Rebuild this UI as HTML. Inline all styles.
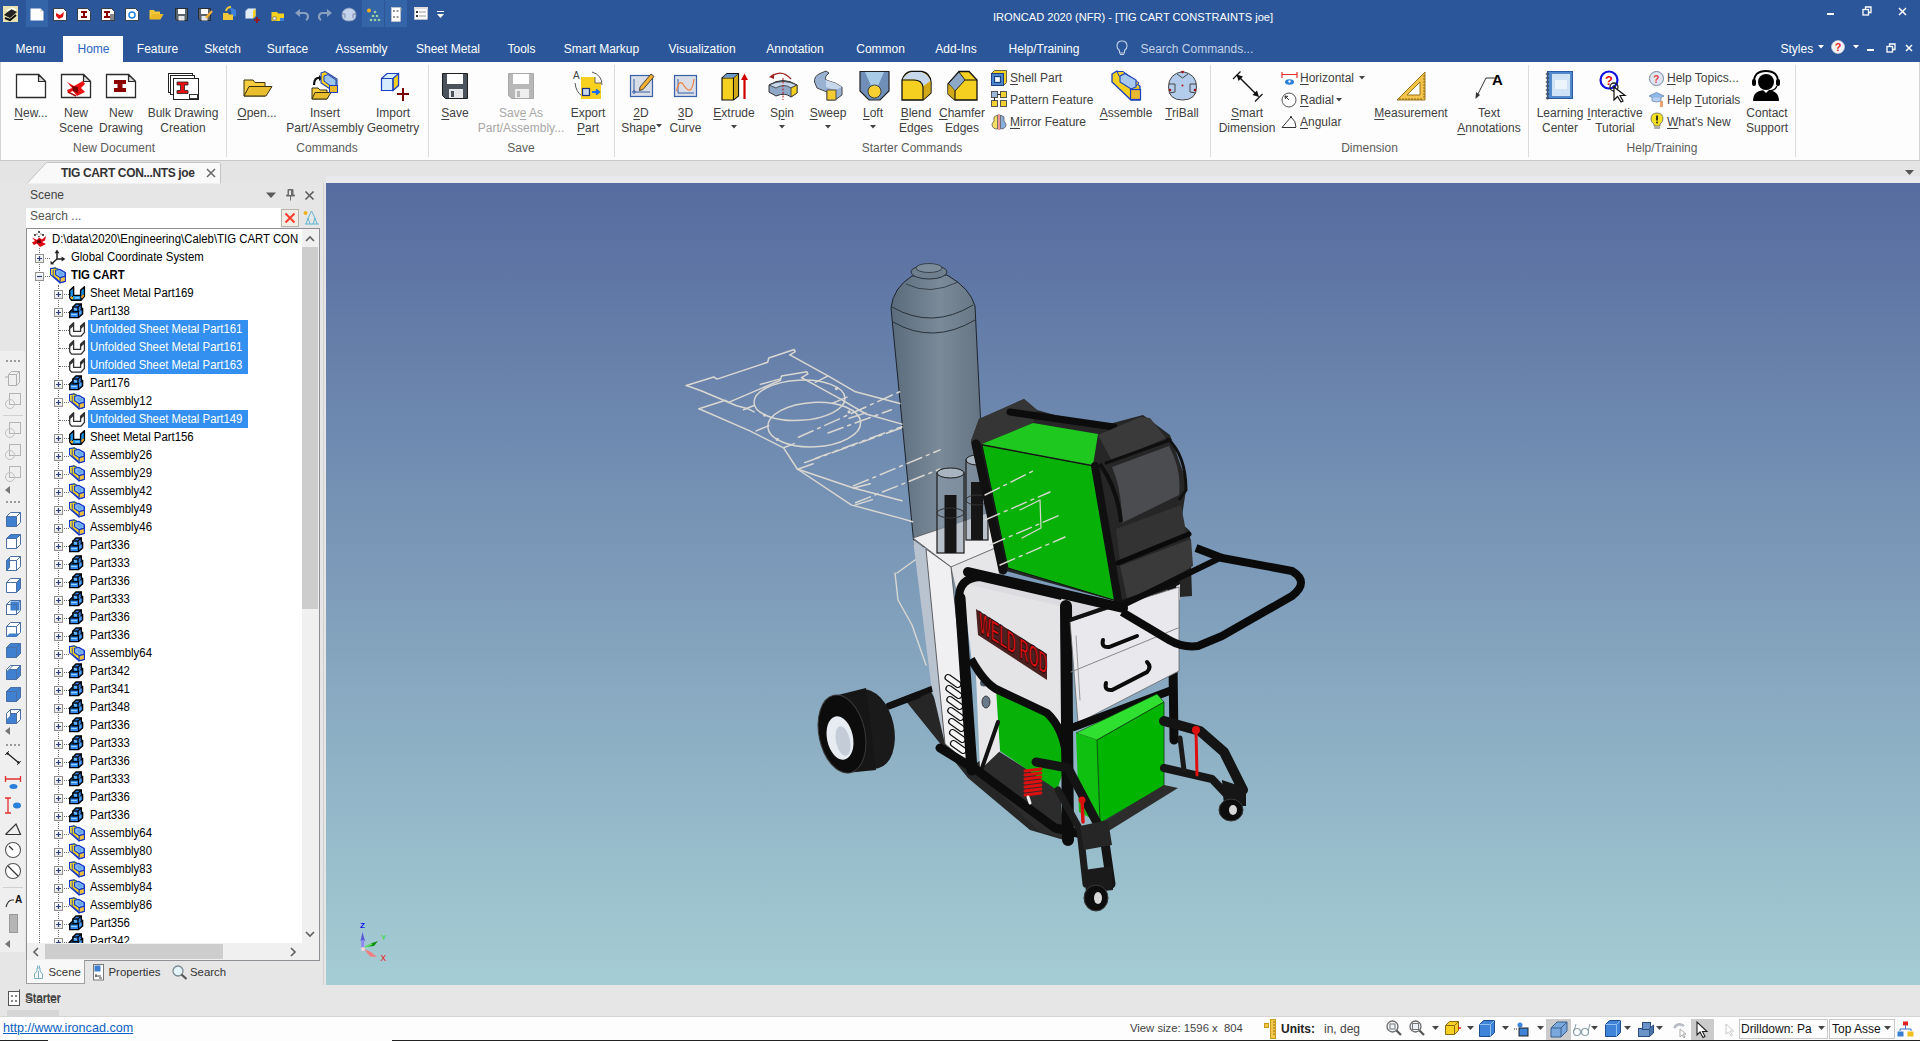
<!DOCTYPE html>
<html><head><meta charset="utf-8">
<style>
*{margin:0;padding:0;box-sizing:border-box}
html,body{width:1920px;height:1041px;overflow:hidden;background:#e6e6e6;font-family:"Liberation Sans",sans-serif;font-size:12px;color:#222}
.a{position:absolute}
.t{position:absolute;white-space:nowrap;line-height:15px}
.c{transform:translateX(-50%);text-align:center}
svg{position:absolute;overflow:visible}
</style></head><body>
<!-- title bar + tab row -->
<div class="a" style="left:0;top:0;width:1920px;height:62px;background:#2b579a"></div>
<div class="a" style="left:26px;top:0;width:22px;height:27px;background:#3565a9"></div>
<div class="a" style="left:362px;top:0;width:22px;height:27px;background:#3565a9"></div>
<div class="a" style="left:385px;top:0;width:22px;height:27px;background:#3565a9"></div>
<!-- home tab -->
<div class="a" style="left:63px;top:36px;width:60px;height:27px;background:#fdfdfd"></div>
<!-- ribbon -->
<div class="a" style="left:0;top:62px;width:1920px;height:99px;background:#fdfdfd;border-left:1px solid #d4d4d4;border-right:1px solid #d4d4d4;border-bottom:1px solid #c8c8c8"></div>
<!-- doc tab row -->
<div class="a" style="left:0;top:161px;width:1920px;height:22px;background:#e4e4e4"></div><div class="a" style="left:326px;top:176px;width:1594px;height:7px;background:#e9e9ee"></div>
<!-- viewport -->
<div class="a" style="left:326px;top:183px;width:1594px;height:802px;background:linear-gradient(#566b9f,#a5cdd4)"></div>
<!-- status bar -->
<div class="a" style="left:0;top:1016px;width:1920px;height:25px;background:#fdfdfd;border-top:1px solid #d6d6d6"></div>

<div class="t" style="left:30.5px;top:42.84px;font-size:12px;line-height:12px;color:#ffffff;transform:translateX(-50%);">Menu</div>
<div class="t" style="left:93.5px;top:42.84px;font-size:12px;line-height:12px;color:#2b64c4;transform:translateX(-50%);">Home</div>
<div class="t" style="left:157.5px;top:42.84px;font-size:12px;line-height:12px;color:#ffffff;transform:translateX(-50%);">Feature</div>
<div class="t" style="left:222.5px;top:42.84px;font-size:12px;line-height:12px;color:#ffffff;transform:translateX(-50%);">Sketch</div>
<div class="t" style="left:287.5px;top:42.84px;font-size:12px;line-height:12px;color:#ffffff;transform:translateX(-50%);">Surface</div>
<div class="t" style="left:361.5px;top:42.84px;font-size:12px;line-height:12px;color:#ffffff;transform:translateX(-50%);">Assembly</div>
<div class="t" style="left:448px;top:42.84px;font-size:12px;line-height:12px;color:#ffffff;transform:translateX(-50%);">Sheet Metal</div>
<div class="t" style="left:521.5px;top:42.84px;font-size:12px;line-height:12px;color:#ffffff;transform:translateX(-50%);">Tools</div>
<div class="t" style="left:601.5px;top:42.84px;font-size:12px;line-height:12px;color:#ffffff;transform:translateX(-50%);">Smart Markup</div>
<div class="t" style="left:702px;top:42.84px;font-size:12px;line-height:12px;color:#ffffff;transform:translateX(-50%);">Visualization</div>
<div class="t" style="left:795px;top:42.84px;font-size:12px;line-height:12px;color:#ffffff;transform:translateX(-50%);">Annotation</div>
<div class="t" style="left:880.6px;top:42.84px;font-size:12px;line-height:12px;color:#ffffff;transform:translateX(-50%);">Common</div>
<div class="t" style="left:956px;top:42.84px;font-size:12px;line-height:12px;color:#ffffff;transform:translateX(-50%);">Add-Ins</div>
<div class="t" style="left:1044px;top:42.84px;font-size:12px;line-height:12px;color:#ffffff;transform:translateX(-50%);">Help/Training</div>
<div class="t" style="left:1140.5px;top:42.84px;font-size:12px;line-height:12px;color:#c5d2e6;">Search Commands...</div>
<div class="t" style="left:1780.5px;top:42.84px;font-size:12px;line-height:12px;color:#ffffff;">Styles</div>
<div class="t" style="left:993px;top:11.60px;font-size:11.1px;line-height:11.1px;color:#ffffff;">IRONCAD 2020 (NFR) - [TIG CART CONSTRAINTS joe]</div>
<svg style="left:3px;top:6px" width="15" height="16" viewBox="0 0 15 16"><rect x="0" y="0" width="15" height="16" fill="#e8e2b0"/><path d="M1 9 L8 3 L14 6 L7 12 Z" fill="#222"/><path d="M2 12 L7 14 L13 9" stroke="#111" stroke-width="2" fill="none"/><path d="M4 5 L9 2 L13 4" stroke="#fff" stroke-width="1.5" fill="none"/></svg>
<svg style="left:30px;top:8px" width="14" height="13" viewBox="0 0 14 13"><path d="M0.5 0.5 H10.5 L13.5 3.5 V12.5 H0.5 Z" fill="#fff"/><path d="M10.5 0.5 V3.5 H13.5" fill="#ccc"/></svg>
<svg style="left:53px;top:8px" width="14" height="13" viewBox="0 0 14 13"><path d="M0.5 0.5 H10.5 L13.5 3.5 V12.5 H0.5 Z" fill="#fff" stroke="#222" stroke-width="0.8"/><path d="M3 5 L7 7 L11 4 L10 9 L6 11 L3 8 Z" fill="#e01010"/></svg>
<svg style="left:77px;top:8px" width="14" height="13" viewBox="0 0 14 13"><path d="M0.5 0.5 H10.5 L13.5 3.5 V12.5 H0.5 Z" fill="#fff" stroke="#222" stroke-width="0.8"/><path d="M4 3 H10 V5 H8 V8 H10 V10 H4 V8 H6 V5 H4 Z" fill="#8b0000"/></svg>
<svg style="left:101px;top:8px" width="14" height="13" viewBox="0 0 14 13"><path d="M0.5 0.5 H10.5 L13.5 3.5 V12.5 H0.5 Z" fill="#fff" stroke="#222" stroke-width="0.8"/><path d="M3 3 H9 V5 H7 V8 H9 V10 H3 V8 H5 V5 H3 Z" fill="#8b0000"/><path d="M9 7 H13 M9 9 H13 M9 11 H13" stroke="#111"/></svg>
<svg style="left:125px;top:8px" width="14" height="13" viewBox="0 0 14 13"><path d="M0.5 0.5 H10.5 L13.5 3.5 V12.5 H0.5 Z" fill="#fff" stroke="#222" stroke-width="0.8"/><circle cx="7" cy="7" r="3" fill="none" stroke="#2080e0" stroke-width="1.5"/></svg>
<svg style="left:149px;top:9px" width="15" height="12" viewBox="0 0 15 12"><path d="M0.5 1 H5 L6 2.5 H11 V10 H0.5 Z" fill="#f0c838"/><path d="M0.5 10.5 L3 5 H14.5 L11.5 10.5 Z" fill="#e8b828"/></svg>
<svg style="left:175px;top:8px" width="13" height="13" viewBox="0 0 13 13"><path d="M0.5 0.5 H12.5 V12.5 H2 L0.5 11 Z" fill="#5a626c" stroke="#222" stroke-width="0.8"/><rect x="3" y="1" width="7" height="5" fill="#fff"/><rect x="3.5" y="8" width="6" height="4.5" fill="#e4e6ea"/></svg>
<svg style="left:198px;top:8px" width="15" height="13" viewBox="0 0 15 13"><path d="M0.5 0.5 H12.5 V12.5 H2 L0.5 11 Z" fill="#5a626c" stroke="#222" stroke-width="0.8"/><rect x="3" y="1" width="7" height="5" fill="#fff"/><rect x="3.5" y="8" width="6" height="4.5" fill="#e4e6ea"/><path d="M8 10 L14 3" stroke="#f5b030" stroke-width="2.2"/></svg>
<svg style="left:221px;top:6px" width="16" height="16" viewBox="0 0 16 16"><path d="M9 1 L15 4 V10 L11 11 Z" fill="#3a80d8"/><path d="M2 7 H7 L8 8.5 H12 V14 H2 Z" fill="#f0c838"/><path d="M5 5 Q6 1 10 1" stroke="#f0c838" stroke-width="2" fill="none"/></svg>
<svg style="left:245px;top:8px" width="16" height="15" viewBox="0 0 16 15"><path d="M0.5 3 L3 0.5 H10.5 V8 L8 10.5 H0.5 Z" fill="#e0ecf8" stroke="#8aa8c8" stroke-width="0.7"/><path d="M8 3 L10.5 0.5 V8 L8 10.5 Z" fill="#f5d020"/><path d="M9 12 H15 M12 9 V15" stroke="#a01010" stroke-width="1.6"/></svg>
<svg style="left:271px;top:10px" width="15" height="12" viewBox="0 0 15 12"><path d="M0.5 2 H6 L7 3.5 H13 V11 H0.5 Z" fill="#f5d020"/><rect x="2" y="7" width="3" height="3" fill="#fff" stroke="#555" stroke-width="0.6"/><rect x="9" y="8" width="4" height="3" fill="#3a80d8"/></svg>
<svg style="left:295px;top:9px" width="14" height="11" viewBox="0 0 14 11"><path d="M3 4 H9 Q13 4 13 8 Q13 10 11 11" fill="none" stroke="#8aa0c0" stroke-width="2.2"/><path d="M0 4 L5 0 V8 Z" fill="#8aa0c0"/></svg>
<svg style="left:318px;top:9px" width="14" height="11" viewBox="0 0 14 11"><path d="M11 4 H5 Q1 4 1 8 Q1 10 3 11" fill="none" stroke="#8aa0c0" stroke-width="2.2"/><path d="M14 4 L9 0 V8 Z" fill="#8aa0c0"/></svg>
<svg style="left:341px;top:7px" width="16" height="15" viewBox="0 0 16 15"><path d="M8 1 Q15 2 15 8 Q15 14 8 14 Q1 14 1 8 Q1 2 8 1 Z" fill="#c4d4ec" stroke="#8a9ab8" stroke-width="0.8"/><path d="M1 7 H4 V11 M15 7 H12 V11" stroke="#7a8aa8" fill="none"/></svg>
<svg style="left:366px;top:8px" width="16" height="15" viewBox="0 0 16 15"><circle cx="3" cy="2.5" r="2" fill="#f0b020"/><circle cx="9" cy="4" r="1.3" fill="#9ad0a0"/><circle cx="7" cy="8" r="1.3" fill="#9ad0a0"/><circle cx="11" cy="8" r="1.3" fill="#9ad0a0"/><circle cx="5" cy="12" r="1.3" fill="#9ad0a0"/><circle cx="9" cy="12" r="1.3" fill="#9ad0a0"/><circle cx="13" cy="12" r="1.3" fill="#9ad0a0"/></svg>
<svg style="left:391px;top:7px" width="12" height="15" viewBox="0 0 12 15"><rect x="0.5" y="0.5" width="9" height="14" fill="#fff" stroke="#ccc" stroke-width="0.6"/><rect x="2" y="3" width="2" height="2" fill="#999"/><rect x="5.5" y="3" width="2" height="2" fill="#999"/><rect x="2" y="9" width="2" height="2" fill="#999"/><rect x="5.5" y="9" width="2" height="2" fill="#999"/><path d="M10 1 V4" stroke="#aaa"/></svg>
<svg style="left:414px;top:7px" width="14" height="13" viewBox="0 0 14 13"><rect x="0.5" y="0.5" width="13" height="12" fill="#fff" stroke="#ccc" stroke-width="0.6"/><rect x="0" y="0" width="14" height="2" fill="#ddd"/><rect x="2" y="4" width="2" height="2" fill="#333"/><rect x="2" y="8" width="2" height="2" fill="#333"/><path d="M5 5 H12 M5 9 H12" stroke="#999"/></svg>
<svg style="left:437px;top:11px" width="7" height="8" viewBox="0 0 7 8"><path d="M0 0.5 H7" stroke="#fff"/><path d="M0 3 H7 L3.5 7 Z" fill="#fff"/></svg>
<div class="a" style="left:1827px;top:13px;width:7px;height:2px;background:#ffffff;"></div>
<svg style="left:1862px;top:6px" width="10" height="10" viewBox="0 0 10 10"><rect x="1" y="3.5" width="5.5" height="5.5" fill="none" stroke="#fff" stroke-width="1.3"/><path d="M3.5 3.5 V1 H9 V6.5 H6.5" fill="none" stroke="#fff" stroke-width="1.3"/></svg>
<svg style="left:1898px;top:7px" width="9" height="9" viewBox="0 0 9 9"><path d="M1 1 L8 8 M8 1 L1 8" stroke="#fff" stroke-width="1.5"/></svg>
<svg style="left:1818px;top:45px" width="6" height="4" viewBox="0 0 6 4"><path d="M0 0 H6 L3 3.5 Z" fill="#fff"/></svg>
<svg style="left:1831px;top:40px" width="14" height="14" viewBox="0 0 14 14"><circle cx="7" cy="7" r="6.5" fill="#f2f2f4" stroke="#d8d8e0" stroke-width="0.6"/><text x="3.8" y="11.3" font-size="11" font-weight="bold" font-family="Liberation Sans" fill="#e82828">?</text></svg>
<svg style="left:1853px;top:45px" width="6" height="4" viewBox="0 0 6 4"><path d="M0 0 H6 L3 3.5 Z" fill="#fff"/></svg>
<div class="a" style="left:1867px;top:49px;width:7px;height:2px;background:#ffffff;"></div>
<svg style="left:1886px;top:43px" width="10" height="10" viewBox="0 0 10 10"><rect x="1" y="3.5" width="5.5" height="5.5" fill="none" stroke="#fff" stroke-width="1.3"/><path d="M3.5 3.5 V1 H9 V6.5 H6.5" fill="none" stroke="#fff" stroke-width="1.3"/></svg>
<svg style="left:1905px;top:44px" width="8" height="8" viewBox="0 0 8 8"><path d="M1 1 L7 7 M7 1 L1 7" stroke="#fff" stroke-width="1.5"/></svg>
<svg style="left:1116px;top:40px" width="12" height="16" viewBox="0 0 12 16"><path d="M6 1 Q11 1 11 6 Q11 9 8.5 10.5 V13 H3.5 V10.5 Q1 9 1 6 Q1 1 6 1 Z" fill="none" stroke="#c5d2e6" stroke-width="1.1"/><path d="M4 14.5 H8" stroke="#c5d2e6"/></svg>
<div class="t" style="left:31px;top:106.84px;font-size:12px;line-height:12px;color:#404040;transform:translateX(-50%);"><u style="text-decoration-thickness:1px;text-underline-offset:2px">N</u>ew...</div>
<div class="t" style="left:76px;top:106.84px;font-size:12px;line-height:12px;color:#404040;transform:translateX(-50%);">New</div>
<div class="t" style="left:76px;top:121.84px;font-size:12px;line-height:12px;color:#404040;transform:translateX(-50%);">Scene</div>
<div class="t" style="left:121px;top:106.84px;font-size:12px;line-height:12px;color:#404040;transform:translateX(-50%);">New</div>
<div class="t" style="left:121px;top:121.84px;font-size:12px;line-height:12px;color:#404040;transform:translateX(-50%);">Drawing</div>
<div class="t" style="left:183px;top:106.84px;font-size:12px;line-height:12px;color:#404040;transform:translateX(-50%);">Bulk Drawing</div>
<div class="t" style="left:183px;top:121.84px;font-size:12px;line-height:12px;color:#404040;transform:translateX(-50%);">Creation</div>
<div class="t" style="left:257px;top:106.84px;font-size:12px;line-height:12px;color:#404040;transform:translateX(-50%);"><u style="text-decoration-thickness:1px;text-underline-offset:2px">O</u>pen...</div>
<div class="t" style="left:325px;top:106.84px;font-size:12px;line-height:12px;color:#404040;transform:translateX(-50%);">Insert</div>
<div class="t" style="left:325px;top:121.84px;font-size:12px;line-height:12px;color:#404040;transform:translateX(-50%);">Part/Assembly</div>
<div class="t" style="left:393px;top:106.84px;font-size:12px;line-height:12px;color:#404040;transform:translateX(-50%);">Import</div>
<div class="t" style="left:393px;top:121.84px;font-size:12px;line-height:12px;color:#404040;transform:translateX(-50%);">Geometry</div>
<div class="t" style="left:455px;top:106.84px;font-size:12px;line-height:12px;color:#404040;transform:translateX(-50%);"><u style="text-decoration-thickness:1px;text-underline-offset:2px">S</u>ave</div>
<div class="t" style="left:521px;top:106.84px;font-size:12px;line-height:12px;color:#a8a8a8;transform:translateX(-50%);">Sav<u style="text-decoration-thickness:1px;text-underline-offset:2px">e</u> As</div>
<div class="t" style="left:521px;top:121.84px;font-size:12px;line-height:12px;color:#a8a8a8;transform:translateX(-50%);">Part/Assembly...</div>
<div class="t" style="left:588px;top:106.84px;font-size:12px;line-height:12px;color:#404040;transform:translateX(-50%);">Export</div>
<div class="t" style="left:588px;top:121.84px;font-size:12px;line-height:12px;color:#404040;transform:translateX(-50%);"><u style="text-decoration-thickness:1px;text-underline-offset:2px">P</u>art</div>
<div class="t" style="left:641px;top:106.84px;font-size:12px;line-height:12px;color:#404040;transform:translateX(-50%);"><u style="text-decoration-thickness:1px;text-underline-offset:2px">2</u>D</div>
<div class="t" style="left:638.5px;top:121.84px;font-size:12px;line-height:12px;color:#404040;transform:translateX(-50%);">Shape</div>
<div class="t" style="left:685.5px;top:106.84px;font-size:12px;line-height:12px;color:#404040;transform:translateX(-50%);"><u style="text-decoration-thickness:1px;text-underline-offset:2px">3</u>D</div>
<div class="t" style="left:685.5px;top:121.84px;font-size:12px;line-height:12px;color:#404040;transform:translateX(-50%);">Curve</div>
<div class="t" style="left:734px;top:106.84px;font-size:12px;line-height:12px;color:#404040;transform:translateX(-50%);"><u style="text-decoration-thickness:1px;text-underline-offset:2px">E</u>xtrude</div>
<div class="t" style="left:782px;top:106.84px;font-size:12px;line-height:12px;color:#404040;transform:translateX(-50%);">S<u style="text-decoration-thickness:1px;text-underline-offset:2px">p</u>in</div>
<div class="t" style="left:828px;top:106.84px;font-size:12px;line-height:12px;color:#404040;transform:translateX(-50%);"><u style="text-decoration-thickness:1px;text-underline-offset:2px">S</u>weep</div>
<div class="t" style="left:873px;top:106.84px;font-size:12px;line-height:12px;color:#404040;transform:translateX(-50%);"><u style="text-decoration-thickness:1px;text-underline-offset:2px">L</u>oft</div>
<div class="t" style="left:916px;top:106.84px;font-size:12px;line-height:12px;color:#404040;transform:translateX(-50%);"><u style="text-decoration-thickness:1px;text-underline-offset:2px">B</u>lend</div>
<div class="t" style="left:916px;top:121.84px;font-size:12px;line-height:12px;color:#404040;transform:translateX(-50%);">Edges</div>
<div class="t" style="left:962px;top:106.84px;font-size:12px;line-height:12px;color:#404040;transform:translateX(-50%);"><u style="text-decoration-thickness:1px;text-underline-offset:2px">C</u>hamfer</div>
<div class="t" style="left:962px;top:121.84px;font-size:12px;line-height:12px;color:#404040;transform:translateX(-50%);">Edges</div>
<div class="t" style="left:1126px;top:106.84px;font-size:12px;line-height:12px;color:#404040;transform:translateX(-50%);"><u style="text-decoration-thickness:1px;text-underline-offset:2px">A</u>ssemble</div>
<div class="t" style="left:1182px;top:106.84px;font-size:12px;line-height:12px;color:#404040;transform:translateX(-50%);"><u style="text-decoration-thickness:1px;text-underline-offset:2px">T</u>riBall</div>
<div class="t" style="left:1247px;top:106.84px;font-size:12px;line-height:12px;color:#404040;transform:translateX(-50%);"><u style="text-decoration-thickness:1px;text-underline-offset:2px">S</u>mart</div>
<div class="t" style="left:1247px;top:121.84px;font-size:12px;line-height:12px;color:#404040;transform:translateX(-50%);">Dimension</div>
<div class="t" style="left:1411px;top:106.84px;font-size:12px;line-height:12px;color:#404040;transform:translateX(-50%);"><u style="text-decoration-thickness:1px;text-underline-offset:2px">M</u>easurement</div>
<div class="t" style="left:1489px;top:106.84px;font-size:12px;line-height:12px;color:#404040;transform:translateX(-50%);">Text</div>
<div class="t" style="left:1489px;top:121.84px;font-size:12px;line-height:12px;color:#404040;transform:translateX(-50%);"><u style="text-decoration-thickness:1px;text-underline-offset:2px">A</u>nnotations</div>
<div class="t" style="left:1560px;top:106.84px;font-size:12px;line-height:12px;color:#404040;transform:translateX(-50%);">Learning</div>
<div class="t" style="left:1560px;top:121.84px;font-size:12px;line-height:12px;color:#404040;transform:translateX(-50%);">Center</div>
<div class="t" style="left:1615px;top:106.84px;font-size:12px;line-height:12px;color:#404040;transform:translateX(-50%);"><u style="text-decoration-thickness:1px;text-underline-offset:2px">I</u>nteractive</div>
<div class="t" style="left:1615px;top:121.84px;font-size:12px;line-height:12px;color:#404040;transform:translateX(-50%);">Tutorial</div>
<div class="t" style="left:1767px;top:106.84px;font-size:12px;line-height:12px;color:#404040;transform:translateX(-50%);">Contact</div>
<div class="t" style="left:1767px;top:121.84px;font-size:12px;line-height:12px;color:#404040;transform:translateX(-50%);">Support</div>
<svg style="left:656px;top:123.5px" width="6" height="3.5" viewBox="0 0 6 3.5"><path d="M0 0 H6 L3 3.5 Z" fill="#444"/></svg>
<svg style="left:731px;top:124.5px" width="6" height="3.5" viewBox="0 0 6 3.5"><path d="M0 0 H6 L3 3.5 Z" fill="#444"/></svg>
<svg style="left:779px;top:124.5px" width="6" height="3.5" viewBox="0 0 6 3.5"><path d="M0 0 H6 L3 3.5 Z" fill="#444"/></svg>
<svg style="left:825px;top:124.5px" width="6" height="3.5" viewBox="0 0 6 3.5"><path d="M0 0 H6 L3 3.5 Z" fill="#444"/></svg>
<svg style="left:870px;top:124.5px" width="6" height="3.5" viewBox="0 0 6 3.5"><path d="M0 0 H6 L3 3.5 Z" fill="#444"/></svg>
<svg style="left:1359px;top:75.5px" width="6" height="3.5" viewBox="0 0 6 3.5"><path d="M0 0 H6 L3 3.5 Z" fill="#444"/></svg>
<svg style="left:1336px;top:97.5px" width="6" height="3.5" viewBox="0 0 6 3.5"><path d="M0 0 H6 L3 3.5 Z" fill="#444"/></svg>
<div class="t" style="left:114px;top:141.84px;font-size:12px;line-height:12px;color:#5c5c5c;transform:translateX(-50%);">New Document</div>
<div class="t" style="left:327px;top:141.84px;font-size:12px;line-height:12px;color:#5c5c5c;transform:translateX(-50%);">Commands</div>
<div class="t" style="left:521px;top:141.84px;font-size:12px;line-height:12px;color:#5c5c5c;transform:translateX(-50%);">Save</div>
<div class="t" style="left:912px;top:141.84px;font-size:12px;line-height:12px;color:#5c5c5c;transform:translateX(-50%);">Starter Commands</div>
<div class="t" style="left:1369.5px;top:141.84px;font-size:12px;line-height:12px;color:#5c5c5c;transform:translateX(-50%);">Dimension</div>
<div class="t" style="left:1662px;top:141.84px;font-size:12px;line-height:12px;color:#5c5c5c;transform:translateX(-50%);">Help/Training</div>
<div class="t" style="left:1010px;top:71.84px;font-size:12px;line-height:12px;color:#404040;"><u style="text-decoration-thickness:1px;text-underline-offset:2px">S</u>hell Part</div>
<div class="t" style="left:1010px;top:93.84px;font-size:12px;line-height:12px;color:#404040;">Pattern Feature</div>
<div class="t" style="left:1010px;top:115.84px;font-size:12px;line-height:12px;color:#404040;"><u style="text-decoration-thickness:1px;text-underline-offset:2px">M</u>irror Feature</div>
<div class="t" style="left:1300px;top:71.84px;font-size:12px;line-height:12px;color:#404040;"><u style="text-decoration-thickness:1px;text-underline-offset:2px">H</u>orizontal</div>
<div class="t" style="left:1300px;top:93.84px;font-size:12px;line-height:12px;color:#404040;"><u style="text-decoration-thickness:1px;text-underline-offset:2px">R</u>adial</div>
<div class="t" style="left:1300px;top:115.84px;font-size:12px;line-height:12px;color:#404040;"><u style="text-decoration-thickness:1px;text-underline-offset:2px">A</u>ngular</div>
<div class="t" style="left:1667px;top:71.84px;font-size:12px;line-height:12px;color:#404040;"><u style="text-decoration-thickness:1px;text-underline-offset:2px">H</u>elp Topics...</div>
<div class="t" style="left:1667px;top:93.84px;font-size:12px;line-height:12px;color:#404040;">Help <u style="text-decoration-thickness:1px;text-underline-offset:2px">T</u>utorials</div>
<div class="t" style="left:1667px;top:115.84px;font-size:12px;line-height:12px;color:#404040;"><u style="text-decoration-thickness:1px;text-underline-offset:2px">W</u>hat's New</div>
<div class="a" style="left:226px;top:65px;width:1px;height:92px;background:#dcdcdc;"></div>
<div class="a" style="left:428px;top:65px;width:1px;height:92px;background:#dcdcdc;"></div>
<div class="a" style="left:614px;top:65px;width:1px;height:92px;background:#dcdcdc;"></div>
<div class="a" style="left:1210px;top:65px;width:1px;height:92px;background:#dcdcdc;"></div>
<div class="a" style="left:1528px;top:65px;width:1px;height:92px;background:#dcdcdc;"></div>
<div class="a" style="left:1795px;top:65px;width:1px;height:92px;background:#dcdcdc;"></div>
<svg style="left:16px;top:74px" width="31" height="25" viewBox="0 0 31 25"><path d="M0.5 0.5 H22.5 L29.5 7.5 V23.5 H0.5 Z" fill="#fff" stroke="#2b2b2b" stroke-width="1.3"/><path d="M22.5 0.5 V7.5 H29.5 Z" fill="#d8d8d8" stroke="#2b2b2b" stroke-width="1.2" stroke-linejoin="round"/></svg>
<svg style="left:61px;top:74px" width="31" height="25" viewBox="0 0 31 25"><path d="M0.5 0.5 H22.5 L29.5 7.5 V23.5 H0.5 Z" fill="#fff" stroke="#2b2b2b" stroke-width="1.3"/><path d="M22.5 0.5 V7.5 H29.5 Z" fill="#d8d8d8" stroke="#2b2b2b" stroke-width="1.2" stroke-linejoin="round"/><path d="M6 8 L13 12 L22 7 L24 10 L20 14 L24 18 L16 22 L12 17 L7 19 L6 16 L11 14 Z" fill="#ee1010"/><path d="M11 12 L17 13 L17 19 L12 17 Z" fill="#7a0000"/><path d="M7 18 L15 22" stroke="#aa1010" stroke-width="1.5"/></svg>
<svg style="left:106px;top:74px" width="31" height="25" viewBox="0 0 31 25"><path d="M0.5 0.5 H22.5 L29.5 7.5 V23.5 H0.5 Z" fill="#fff" stroke="#2b2b2b" stroke-width="1.3"/><path d="M22.5 0.5 V7.5 H29.5 Z" fill="#d8d8d8" stroke="#2b2b2b" stroke-width="1.2" stroke-linejoin="round"/><path d="M8 6 H20 V10 H16.5 V14 H20 V18 H8 V14 H11.5 V10 H8 Z" fill="#8b0000"/></svg>
<svg style="left:168px;top:73px" width="32" height="27" viewBox="0 0 32 27"><rect x="0.5" y="0.5" width="24" height="19" fill="#fff" stroke="#222"/><rect x="2.5" y="2.5" width="24" height="19" fill="#fff" stroke="#222"/><rect x="5.5" y="5.5" width="25" height="21" fill="#fff" stroke="#222"/><path d="M9 9 H20 V12 H16.5 V17.5 H20 V20.5 H9 V17.5 H12.5 V12 H9 Z" fill="#e81010" stroke="#222" stroke-width="0.8"/><rect x="21.5" y="21.5" width="8" height="4" fill="#fff" stroke="#333"/></svg>
<svg style="left:243px;top:77px" width="30" height="21" viewBox="0 0 30 21"><path d="M1 3 H10 L12 5.5 H22 V19 H1 Z" fill="#f5cd3e" stroke="#3a3010" stroke-width="1"/><path d="M1 19 L6 9.5 H29 L23 19 Z" fill="#e8bd2e" stroke="#3a3010" stroke-width="1"/></svg>
<svg style="left:310px;top:71px" width="31" height="31" viewBox="0 0 31 31"><path d="M4 14 Q4 6 10 7" fill="none" stroke="#111" stroke-width="2.2"/><path d="M9 4 L13 7.5 L9 10 Z" fill="#111"/><path d="M2 17 H8 L10 19 H17 V28 H2 Z" fill="#f5cd3e" stroke="#3a3010"/><path d="M2 28 L5 21.5 H21 L17 28 Z" fill="#e8bd2e" stroke="#3a3010"/><path d="M11 2 L15 0.5 L27 8 V19 L23 20 L11 12 Z" fill="#f5d020" stroke="#1a3fc0" stroke-width="1.1"/><path d="M14 5 L18 3.5 L26 9 V15 L22 16 L14 10 Z" fill="#9cc4f0" stroke="#1a3fc0"/><rect x="19.5" y="14.5" width="8" height="7" fill="#e8b830" stroke="#1a3fc0"/></svg>
<svg style="left:380px;top:72px" width="30" height="30" viewBox="0 0 30 30"><path d="M1.5 6.5 L7 1.5 H18.5 V13.5 L13 18.5 H1.5 Z" fill="#d4ecfc" stroke="#1a3fc0" stroke-width="1.2"/><path d="M13 6.5 L18.5 1.5 V13.5 L13 18.5 Z" fill="#f5d020" stroke="#1a3fc0" stroke-width="1.2"/><path d="M1.5 6.5 H13 V18.5" fill="none" stroke="#1a3fc0" stroke-width="1.2"/><path d="M17 22 H29 M23 16 V29" stroke="#7a0000" stroke-width="2"/></svg>
<svg style="left:442px;top:73px" width="27" height="27" viewBox="0 0 27 27"><path d="M0.5 0.5 H25.5 V25.5 H3.5 L0.5 22.5 Z" fill="#4a525c" stroke="#1e1e1e" stroke-width="1"/><rect x="5" y="1" width="16" height="10" fill="#fff"/><rect x="7" y="16" width="14" height="9" fill="#e4e6ea"/><rect x="9" y="18" width="3" height="6" fill="#4a525c"/></svg>
<svg style="left:508px;top:73px" width="27" height="27" viewBox="0 0 27 27"><path d="M0.5 0.5 H25.5 V25.5 H3.5 L0.5 22.5 Z" fill="#b8b8b8" stroke="#a8a8a8" stroke-width="1"/><rect x="5" y="1" width="16" height="10" fill="#fff"/><rect x="7" y="16" width="14" height="9" fill="#eeeeee"/><rect x="9" y="18" width="3" height="6" fill="#b8b8b8"/></svg>
<svg style="left:573px;top:70px" width="32" height="31" viewBox="0 0 32 31"><text x="0" y="9" font-size="10" font-family="Liberation Sans" fill="#444">A</text><path d="M19 2 Q29 5 29 15" fill="none" stroke="#555" stroke-width="1"/><path d="M2 13 Q3 22 9 26" fill="none" stroke="#555"/><path d="M8 7 H22 L28 13 V29 H8 Z" fill="#f7d020"/><path d="M22 7 V13 H28" fill="#fff" stroke="#444" stroke-width="0.8"/><rect x="9.5" y="18.5" width="7" height="7" fill="#c8d8ec" stroke="#1a3080" stroke-width="1.2"/><path d="M19 22 H25 M23 19.5 L26 22 L23 24.5" stroke="#1a6ae8" stroke-width="2" fill="none"/></svg>
<svg style="left:630px;top:70px" width="25" height="28" viewBox="0 0 25 28"><rect x="0.5" y="5.5" width="22" height="21" fill="#d8dde6" stroke="#3a60a8" stroke-width="1.2"/><path d="M4 9 V22 H20" stroke="#3a60a8" stroke-width="1" fill="none"/><circle cx="4" cy="22" r="1.3" fill="none" stroke="#3a60a8"/><path d="M10 17 L21 4 L24 6.5 L13 19.5 L9.5 20.5 Z" fill="#f5b030" stroke="#333" stroke-width="0.9"/></svg>
<svg style="left:674px;top:75px" width="24" height="23" viewBox="0 0 24 23"><rect x="0.5" y="0.5" width="22" height="21" fill="#d8dde6" stroke="#3a60a8" stroke-width="1.2"/><path d="M4 4 V18 H20" stroke="#3a60a8" stroke-width="1" fill="none"/><path d="M2.5 16 Q5 4 9 9 Q13 16 16 15 Q19 13 20 4" fill="none" stroke="#f08040" stroke-width="1.2"/></svg>
<svg style="left:721px;top:72px" width="28" height="29" viewBox="0 0 28 29"><path d="M1 6 L6 1.5 H17.5 V24 L12.5 28 H1 Z" fill="#f5d020" stroke="#111" stroke-width="1.2"/><path d="M1 6 H12.5 V28 M12.5 6 L17.5 1.5" fill="none" stroke="#111" stroke-width="1.1"/><path d="M1.5 5.5 L6 2 H17 L12.5 5.5 Z" fill="#6a9ad0"/><path d="M13 6 L17 2.5 V23.5 L13 27 Z" fill="#d0a818"/><path d="M23.5 27 V6" stroke="#d00000" stroke-width="2.2"/><path d="M20 8 L23.5 1.5 L27 8 Z" fill="#d00000"/></svg>
<svg style="left:768px;top:71px" width="31" height="30" viewBox="0 0 31 30"><path d="M23 8 Q14 -2 4 5" fill="none" stroke="#a02020" stroke-width="1.2"/><path d="M1 6 L6 2.5 L6 8 Z" fill="#a02020"/><path d="M1 14 Q15 5 29 14 V22 L23 26 Q17 21 8 25 L1 21 Z" fill="#8fa8c8" stroke="#333" stroke-width="1"/><path d="M1 14 Q15 7 29 14 L23 17 Q16 12 8 17 Z" fill="#c8d8ec" stroke="#333" stroke-width="0.8"/><path d="M23 17 L29 14 V22 L23 26 Z" fill="#f5d020" stroke="#333" stroke-width="0.8"/><path d="M15 7 V29" stroke="#c01010" stroke-width="1" stroke-dasharray="2 1.5"/></svg>
<svg style="left:813px;top:70px" width="31" height="32" viewBox="0 0 31 32"><path d="M1.5 12 Q1 6 7 3.5 L13 1 L16 3 Q11 7 13 10 L22 13 L29 17 V25 L22 30 H14 V22 L4 18 Z" fill="#9ab2d2" stroke="#444" stroke-width="1"/><path d="M13 10 L22 13 L29 17 L22 20 L13 17 Z" fill="#c8d8ec"/><rect x="14" y="20" width="9" height="10" fill="#f5cd30" stroke="#444" stroke-width="0.9"/></svg>
<svg style="left:859px;top:70px" width="31" height="32" viewBox="0 0 31 32"><path d="M1 1.5 H30 V21 L21 30 H10 L1 21 Z" fill="#6f8fb8" stroke="#222" stroke-width="1.2"/><path d="M6 2 H25 L18 18 H13 Z" fill="#a8cce8"/><circle cx="15.5" cy="21.5" r="6.5" fill="#f5d030" stroke="#333" stroke-width="0.9"/></svg>
<svg style="left:901px;top:70px" width="31" height="32" viewBox="0 0 31 32"><path d="M1 10 Q4 2 10 1.5 H21 Q29 3 30 12 V23 L22 30 H1 Z" fill="#f5d020" stroke="#111" stroke-width="1.3"/><path d="M1.5 9.5 Q5 3 11 2 H20 Q27 4 29.5 11 L22 16.5 Q19 9 12 9.5 Z" fill="#c8d8ec"/><path d="M22 16.5 L29.5 11 V23 L22 30 Z" fill="#d0a818"/><path d="M1 10 H13 Q21 10 22 17 V30" fill="none" stroke="#111" stroke-width="1.1"/></svg>
<svg style="left:947px;top:70px" width="31" height="32" viewBox="0 0 31 32"><path d="M1 14 L12 1.5 H22 L30 10 V30 H8 L1 24 Z" fill="#f5d020" stroke="#111" stroke-width="1.3"/><path d="M1.5 13.5 L12 2 L18 10 L8 21 Z" fill="#8ea8c8" stroke="#111" stroke-width="0.9"/><path d="M1.5 14 L8 21 V30 L1 24 Z" fill="#d0a818"/><path d="M18 10 H30 M8 21 V30" stroke="#111" stroke-width="1.1"/></svg>
<svg style="left:991px;top:70px" width="16" height="16" viewBox="0 0 16 16"><path d="M0.5 3.5 L3.5 0.5 H15.5 V12.5 L12.5 15.5 H0.5 Z" fill="#f5d020" stroke="#444" stroke-width="0.8"/><rect x="0.5" y="3.5" width="12" height="12" fill="#4a86c8" stroke="#1e3e80"/><rect x="3.5" y="6.5" width="6" height="6" fill="#c8e0f4" stroke="#1e3e80"/><rect x="5" y="8" width="3" height="3" fill="#fff"/></svg>
<svg style="left:991px;top:91px" width="16" height="17" viewBox="0 0 16 17"><rect x="0.5" y="0.5" width="6" height="6" fill="#9ab8d8" stroke="#555"/><rect x="9.5" y="0.5" width="6" height="6" fill="#f5d030" stroke="#555"/><rect x="0.5" y="9.5" width="6" height="6" fill="#f5d030" stroke="#555"/><rect x="9.5" y="9.5" width="6" height="6" fill="#f5d030" stroke="#555"/><path d="M6.5 3.5 H9.5 M3.5 6.5 V9.5" stroke="#222"/></svg>
<svg style="left:991px;top:114px" width="16" height="16" viewBox="0 0 16 16"><path d="M6.5 1 V15 Q1 15 1 10 L3 7 L3 3 Z" fill="#f5e060" stroke="#555" stroke-width="0.8"/><path d="M9.5 1 V15 Q15 15 15 10 L13 7 L13 3 Z" fill="#8ab0e0" stroke="#555" stroke-width="0.8"/><path d="M8 0 V16" stroke="#e03030" stroke-width="1"/></svg>
<svg style="left:1111px;top:70px" width="31" height="32" viewBox="0 0 31 32"><path d="M1 4 L6 1 L12 5 L29 16 V30 H20 L1 12 Z" fill="#f5d020" stroke="#1a3fc0" stroke-width="1.3"/><path d="M6 1.5 L12 1.5 L28 13 L24 17 L8 6 Z" fill="#f5d020" stroke="#1a3fc0"/><path d="M9 6 L14 3.5 L25 10 V17 L20 19 L9 12 Z" fill="#a8c8ec" stroke="#1a3fc0" stroke-width="1.1"/><rect x="19.5" y="19.5" width="10" height="10" fill="#e8b830" stroke="#1a3fc0" stroke-width="1.2"/></svg>
<svg style="left:1167px;top:70px" width="31" height="32" viewBox="0 0 31 32"><path d="M15.5 1.5 Q29.5 4 29.5 17 Q29.5 30 15.5 30 Q1.5 30 1.5 17 Q1.5 4 15.5 1.5 Z" fill="#b4ccec" stroke="#444" stroke-width="1"/><path d="M10 4 L15.5 8 L21 4" fill="none" stroke="#444"/><path d="M1.5 14 L8 14 V22 L2 23 M29.5 14 L23 14 V22 L29 23" fill="none" stroke="#444"/><circle cx="15.5" cy="2" r="1.3" fill="#a01010"/><circle cx="15.5" cy="15.5" r="1" fill="#c01010"/><circle cx="3" cy="20" r="1.3" fill="#a01010"/><circle cx="28" cy="20" r="1.3" fill="#a01010"/></svg>
<svg style="left:1231px;top:70px" width="33" height="33" viewBox="0 0 33 33"><path d="M2 9 L9.5 1.5 M24 31.5 L31.5 24" stroke="#111" stroke-width="1.2"/><path d="M7 6 L26.5 25.5" stroke="#111" stroke-width="1.5"/><path d="M5.5 4.5 L12 6.5 L7.5 11 Z M28 27 L21.5 25 L26 20.5 Z" fill="#111"/></svg>
<svg style="left:1281px;top:71px" width="18" height="16" viewBox="0 0 18 16"><path d="M1 1 V7 M16 1 V7 M1 3.5 H16" stroke="#e03030" stroke-width="1.2"/><ellipse cx="8.5" cy="11" rx="4.5" ry="2.8" fill="#2a80d8"/><circle cx="8.5" cy="10.5" r="1.2" fill="#fff"/></svg>
<svg style="left:1281px;top:92px" width="16" height="16" viewBox="0 0 16 16"><circle cx="8" cy="8" r="7" fill="#fff" stroke="#555" stroke-width="1"/><path d="M4 4 L8 8 M4 4 L7 4.5 M4 4 L4.5 7" stroke="#333" stroke-width="1"/></svg>
<svg style="left:1281px;top:113px" width="16" height="16" viewBox="0 0 16 16"><path d="M1 14.5 H15 M1 14.5 L10 4 Q15 8 15 14" fill="none" stroke="#333" stroke-width="1"/><circle cx="10" cy="4" r="0.9" fill="#111"/></svg>
<svg style="left:1396px;top:70px" width="31" height="32" viewBox="0 0 31 32"><path d="M1 30 L29 2 V30 Z" fill="#f3c34a" stroke="#9a7418" stroke-width="1"/><path d="M11 25 L24 12 V25 Z" fill="#fff" stroke="#9a7418" stroke-width="1"/><path d="M4 30 V28" stroke="#7a5a10" stroke-width="0.8"/><path d="M7 30 V28" stroke="#7a5a10" stroke-width="0.8"/><path d="M10 30 V28" stroke="#7a5a10" stroke-width="0.8"/><path d="M13 30 V28" stroke="#7a5a10" stroke-width="0.8"/><path d="M16 30 V28" stroke="#7a5a10" stroke-width="0.8"/><path d="M19 30 V28" stroke="#7a5a10" stroke-width="0.8"/><path d="M22 30 V28" stroke="#7a5a10" stroke-width="0.8"/><path d="M25 30 V28" stroke="#7a5a10" stroke-width="0.8"/><path d="M29 6 H27" stroke="#7a5a10" stroke-width="0.8"/><path d="M29 9 H27" stroke="#7a5a10" stroke-width="0.8"/><path d="M29 12 H27" stroke="#7a5a10" stroke-width="0.8"/><path d="M29 15 H27" stroke="#7a5a10" stroke-width="0.8"/><path d="M29 18 H27" stroke="#7a5a10" stroke-width="0.8"/><path d="M29 21 H27" stroke="#7a5a10" stroke-width="0.8"/><path d="M29 24 H27" stroke="#7a5a10" stroke-width="0.8"/><path d="M29 27 H27" stroke="#7a5a10" stroke-width="0.8"/></svg>
<svg style="left:1475px;top:71px" width="30" height="30" viewBox="0 0 30 30"><path d="M22 7 H11 L2 25" fill="none" stroke="#333" stroke-width="1"/><path d="M0.5 28 L1 21 L5 24 Z" fill="#333"/><text x="17" y="14" font-size="15" font-weight="bold" font-family="Liberation Sans" fill="#000">A</text></svg>
<svg style="left:1545px;top:71px" width="28" height="29" viewBox="0 0 28 29"><rect x="2.5" y="0.5" width="25" height="27" fill="#4a88d0" stroke="#2a5aa0"/><rect x="6.5" y="2.5" width="19" height="23" fill="#cfe2f6" stroke="#5a8ac8"/><rect x="10" y="9" width="12" height="9" fill="#eef4fb"/><circle cx="2.5" cy="3" r="1.3" fill="none" stroke="#444" stroke-width="0.8"/><circle cx="2.5" cy="7" r="1.3" fill="none" stroke="#444" stroke-width="0.8"/><circle cx="2.5" cy="11" r="1.3" fill="none" stroke="#444" stroke-width="0.8"/><circle cx="2.5" cy="15" r="1.3" fill="none" stroke="#444" stroke-width="0.8"/><circle cx="2.5" cy="19" r="1.3" fill="none" stroke="#444" stroke-width="0.8"/><circle cx="2.5" cy="23" r="1.3" fill="none" stroke="#444" stroke-width="0.8"/><circle cx="2.5" cy="27" r="1.3" fill="none" stroke="#444" stroke-width="0.8"/></svg>
<svg style="left:1599px;top:70px" width="31" height="32" viewBox="0 0 31 32"><circle cx="10" cy="10" r="8.5" fill="#fff" stroke="#1010e0" stroke-width="2.2"/><text x="6" y="15" font-size="13" font-weight="bold" font-family="Liberation Sans" fill="#e81010">?</text><circle cx="15" cy="17" r="4" fill="none" stroke="#222" stroke-width="1.3"/><circle cx="15" cy="17" r="1.8" fill="#1a2a80"/><path d="M15 17 L15 30 L18.5 26.5 L22 32 L24 31 L21 25.5 L26 25.5 Z" fill="#fff" stroke="#111" stroke-width="1.2"/></svg>
<svg style="left:1649px;top:71px" width="15" height="15" viewBox="0 0 15 15"><circle cx="7.5" cy="7.5" r="7" fill="#dde6f2" stroke="#6a7a90" stroke-width="0.9"/><text x="4.3" y="11.5" font-size="10" font-weight="bold" font-family="Liberation Sans" fill="#e84040">?</text></svg>
<svg style="left:1648px;top:92px" width="17" height="16" viewBox="0 0 17 16"><path d="M1 4 L8.5 0.5 L16 4 L8.5 7.5 Z" fill="#90b8e8" stroke="#6a88b0" stroke-width="0.8"/><path d="M4 5.5 V9 Q8.5 11 13 9 V5.5" fill="#b8d0f0" stroke="#6a88b0" stroke-width="0.8"/><rect x="12" y="9" width="3" height="6" fill="#f0a070"/></svg>
<svg style="left:1650px;top:112px" width="14" height="18" viewBox="0 0 14 18"><path d="M7 1 Q13 1 13 7 Q13 10 10 12 V14 H4 V12 Q1 10 1 7 Q1 1 7 1 Z" fill="#f5e020" stroke="#666" stroke-width="0.8"/><path d="M7 3.5 V8.5" stroke="#222" stroke-width="1.8"/><circle cx="7" cy="10.5" r="0.9" fill="#222"/><rect x="4" y="14" width="6" height="3" fill="#b0b0b0"/></svg>
<svg style="left:1751px;top:69px" width="30" height="33" viewBox="0 0 30 33"><path d="M3 13 Q3 2 15 2 Q27 2 27 13" fill="none" stroke="#000" stroke-width="1.8"/><circle cx="15" cy="13" r="8" fill="#000"/><rect x="1" y="10" width="4" height="7" rx="2" fill="#000"/><rect x="25" y="10" width="4" height="7" rx="2" fill="#000"/><path d="M26 17 Q24 22 17 22" fill="none" stroke="#000" stroke-width="1.3"/><path d="M2 32 Q2 21 15 21 Q28 21 28 32 Z" fill="#000"/><path d="M12 21 L15 24 L18 21" fill="#fff"/></svg>
<svg style="left:26px;top:162px" width="196" height="22" viewBox="0 0 196 22"><path d="M1 21.5 L20.5 0.5 L193.5 0.5 L194.5 1.5 L194.5 21.5" fill="#f9f9f9" stroke="#c4c4c4" stroke-width="1"/></svg>
<div class="t" style="left:61px;top:166.84px;font-size:12px;line-height:12px;color:#333;font-weight:bold;letter-spacing:-0.35px;">TIG CART CON...NTS joe</div>
<svg style="left:206px;top:168px" width="10" height="10" viewBox="0 0 10 10"><path d="M1 1 L9 9 M9 1 L1 9" stroke="#666" stroke-width="1.5"/></svg>
<svg style="left:1905px;top:170px" width="10" height="6" viewBox="0 0 10 6"><path d="M0 0 L9 0 L4.5 5 Z" fill="#555"/></svg>
<svg style="left:266px;top:192px" width="11" height="7" viewBox="0 0 11 7"><path d="M0 0.5 L10 0.5 L5 6 Z" fill="#5a5a5a"/></svg>
<svg style="left:286px;top:189px" width="9" height="12" viewBox="0 0 9 12"><path d="M2 0.5 H7 V6 H8.5 V7 H0.5 V6 H2 Z M4.5 7 V11.5" fill="#6a6a6a" stroke="#6a6a6a" stroke-width="1"/><rect x="3" y="1.5" width="2" height="4.5" fill="#e6e6e6"/></svg>
<svg style="left:305px;top:191px" width="9" height="9" viewBox="0 0 9 9"><path d="M0.5 0.5 L8.5 8.5 M8.5 0.5 L0.5 8.5" stroke="#5a5a5a" stroke-width="1.6"/></svg>
<div class="a" style="left:281px;top:209px;width:18px;height:18px;background:#efede6;border:1px solid #b8b4a8"></div>
<svg style="left:284px;top:212px" width="12" height="12" viewBox="0 0 12 12"><path d="M1.5 1.5 L10.5 10.5 M10.5 1.5 L1.5 10.5" stroke="#ff3d2e" stroke-width="2"/></svg>
<svg style="left:302px;top:208px" width="16" height="18" viewBox="0 0 16 18"><circle cx="3.5" cy="5" r="2" fill="#f0b020"/><path d="M9.5 3 L6 10 M9.5 3 L13 10 M6 10 L4 16 M6 10 L8 16 M13 10 L11 16 M13 10 L15 16 M3 16 H17" stroke="#5fb8d0" stroke-width="1" fill="none"/></svg>
<div class="a" style="left:323px;top:183px;width:1px;height:802px;background:#d0d0d0;"></div>
<div class="t" style="left:30px;top:188.84px;font-size:12px;line-height:12px;color:#444;">Scene</div>
<div class="a" style="left:26px;top:208px;width:255px;height:20px;background:#ffffff;"></div>
<div class="t" style="left:30px;top:209.84px;font-size:12px;line-height:12px;color:#555;">Search ...</div>
<div class="a" style="left:26px;top:228px;width:294px;height:733px;background:#ffffff;border:1px solid #8e8e94"></div>
<div class="a" style="left:27px;top:229px;width:275px;height:714px;overflow:hidden"><div class="a" style="left:-27px;top:-229px;width:400px;height:1041px"><div class="a" style="left:39px;top:248px;width:1px;height:697px;border-left:1px dotted #6a6a6a"></div>
<div class="a" style="left:58px;top:285px;width:1px;height:660px;border-left:1px dotted #6a6a6a"></div>
<svg style="left:31px;top:231px" width="16" height="16" viewBox="0 0 16 16"><path d="M1 6.5 L6 9 L8 6.5 L11 8.5 L15 5 L14 9.5 L11 11 L15 13 L9 16 L6 12.5 L3 14 L1 11.5 L4 10 Z" fill="#e00010"/>
<path d="M6 9 L9.5 8.5 L10 12 L6 12.5 Z" fill="#6a0000"/>
<circle cx="4" cy="4" r="0.9" fill="#000"/><circle cx="8" cy="1" r="0.9" fill="#000"/><circle cx="12" cy="4" r="0.9" fill="#000"/><circle cx="8" cy="5.5" r="0.7" fill="#000"/><circle cx="6" cy="3" r="0.6" fill="#000"/><circle cx="10" cy="3" r="0.6" fill="#000"/></svg>
<div class="t" style="left:52px;top:233.19px;font-size:12.3px;line-height:12.3px;color:#000000;transform:scaleX(0.925);transform-origin:0 0;">D:\data\2020\Engineering\Caleb\TIG CART CON</div>
<div class="a" style="left:40px;top:258px;width:10px;height:1px;border-top:1px dotted #6a6a6a"></div>
<div class="a" style="left:35px;top:254px;width:9px;height:9px;border:1px solid #919191;background:linear-gradient(#fff,#e8e8e8)"></div>
<svg style="left:35px;top:254px" width="9" height="9" viewBox="0 0 9 9"><path d="M2 4.5 H7 M4.5 2 V7" stroke="#2c3f78" stroke-width="1.2"/></svg>
<svg style="left:50px;top:249px" width="16" height="16" viewBox="0 0 16 16"><path d="M7 2.5 L7 10 L13 10 M7 10 L2 14.5" fill="none" stroke="#222" stroke-width="1.5"/>
<path d="M4.6 4.2 L7 0.6 L9.4 4.2 Z M11.6 7.6 L15.4 10 L11.6 12.4 Z M0.6 11.8 L0.6 15.6 L4.2 15.2 Z" fill="#222"/></svg>
<div class="t" style="left:71px;top:251.19px;font-size:12.3px;line-height:12.3px;color:#000000;transform:scaleX(0.925);transform-origin:0 0;">Global Coordinate System</div>
<div class="a" style="left:40px;top:276px;width:10px;height:1px;border-top:1px dotted #6a6a6a"></div>
<div class="a" style="left:35px;top:272px;width:9px;height:9px;border:1px solid #919191;background:linear-gradient(#fff,#e8e8e8)"></div>
<svg style="left:35px;top:272px" width="9" height="9" viewBox="0 0 9 9"><path d="M2 4.5 H7" stroke="#2c3f78" stroke-width="1.2"/></svg>
<svg style="left:50px;top:267px" width="16" height="16" viewBox="0 0 16 16"><path d="M0.6 1.6 L5.2 0.8 L15.4 5.8 L15.4 14.4 L10 15.8 L0.6 7.8 Z" fill="#f6d41e" stroke="#1234c8" stroke-width="1.2" stroke-linejoin="miter"/>
<path d="M1.2 2 L3.2 2.6 L3.2 8.8 L1.2 7.4 Z" fill="#f8e040"/><path d="M3.2 2.6 V8.8 L9.8 14.6" fill="none" stroke="#1234c8" stroke-width="0.9"/>
<path d="M5.6 3.2 L9.8 2.4 L15 5.4 L15 9.6 L10.2 10.6 L5.6 7.6 Z" fill="#96c6f4" stroke="#1234c8" stroke-width="1.1"/>
<path d="M7.5 4.5 L10 4 L13.5 6 L13.5 8.5 L10.5 9 L7.5 7 Z" fill="#6aa8ea"/>
<path d="M10.2 10.6 L15.4 9.2 L15.4 14.4 L10 15.8 Z" fill="#f2c040" stroke="#1234c8" stroke-width="1.1"/>
<path d="M4.6 0.9 L7 1.8" stroke="#2a7a2a" stroke-width="1"/></svg>
<div class="t" style="left:71px;top:269.19px;font-size:12.3px;line-height:12.3px;color:#000000;font-weight:bold;transform:scaleX(0.925);transform-origin:0 0;">TIG CART</div>
<div class="a" style="left:59px;top:294px;width:10px;height:1px;border-top:1px dotted #6a6a6a"></div>
<div class="a" style="left:54px;top:290px;width:9px;height:9px;border:1px solid #919191;background:linear-gradient(#fff,#e8e8e8)"></div>
<svg style="left:54px;top:290px" width="9" height="9" viewBox="0 0 9 9"><path d="M2 4.5 H7 M4.5 2 V7" stroke="#2c3f78" stroke-width="1.2"/></svg>
<svg style="left:69px;top:286px" width="16" height="16" viewBox="0 0 16 16"><path d="M0.7 4.4 L4.6 0.7 L4.6 9.4 L11.6 9.4 L11.6 4.2 L15.4 0.7 L15.4 10.4 L12 14.2 L2.6 14.2 L0.7 11.8 Z" fill="#1c94ea" stroke="#000" stroke-width="1.4" stroke-linejoin="round"/>
<path d="M4.6 9.4 L1.6 12.4 M11.6 9.4 L12 14" stroke="#000" stroke-width="1"/>
<path d="M1.8 11 L3.8 12.6" stroke="#ffb400" stroke-width="2.2"/><path d="M12.6 11.6 L14.6 9" stroke="#ff9a00" stroke-width="1.8"/><path d="M6 11.8 H10.5" stroke="#7fd0ff" stroke-width="1.4"/></svg>
<div class="t" style="left:90px;top:287.19px;font-size:12.3px;line-height:12.3px;color:#000000;transform:scaleX(0.925);transform-origin:0 0;">Sheet Metal Part169</div>
<div class="a" style="left:59px;top:312px;width:10px;height:1px;border-top:1px dotted #6a6a6a"></div>
<div class="a" style="left:54px;top:308px;width:9px;height:9px;border:1px solid #919191;background:linear-gradient(#fff,#e8e8e8)"></div>
<svg style="left:54px;top:308px" width="9" height="9" viewBox="0 0 9 9"><path d="M2 4.5 H7 M4.5 2 V7" stroke="#2c3f78" stroke-width="1.2"/></svg>
<svg style="left:69px;top:303px" width="16" height="16" viewBox="0 0 16 16"><path d="M0.7 9 L3.5 6.2 L4 6.2 L4 4 L7 1 L12.3 1 L12.3 4.8 L13.6 5.5 L13.6 11 L9.5 14.6 L0.7 14.6 Z" fill="#2f86f2" stroke="#000" stroke-width="1.4" stroke-linejoin="miter"/>
<rect x="4" y="4" width="5" height="4.6" fill="#3d95fa" stroke="#000" stroke-width="1.3"/>
<path d="M0.7 9 H9.5 V14.6 M9 4 L12.3 1 M9.5 9 L13.6 5.5" fill="none" stroke="#000" stroke-width="1.2"/>
<path d="M2 11.5 H8" stroke="#8fd4ff" stroke-width="1.2"/><path d="M5 5.5 L7.5 6.5" stroke="#9fdcff" stroke-width="1"/><path d="M11 7 V11" stroke="#7cc4ff" stroke-width="1"/></svg>
<div class="t" style="left:90px;top:305.19px;font-size:12.3px;line-height:12.3px;color:#000000;transform:scaleX(0.925);transform-origin:0 0;">Part138</div>
<div class="a" style="left:59px;top:330px;width:10px;height:1px;border-top:1px dotted #6a6a6a"></div>
<div class="a" style="left:88px;top:320px;width:160px;height:18px;background:#3390f0;"></div>
<svg style="left:69px;top:322px" width="16" height="16" viewBox="0 0 16 16"><path d="M0.7 4.4 L4.6 0.7 L4.6 9.4 L11.6 9.4 L11.6 4.2 L15.4 0.7 L15.4 10.4 L12 14.2 L2.6 14.2 L0.7 11.8 Z" fill="#fff" stroke="#303030" stroke-width="1.3" stroke-linejoin="round"/>
<path d="M0.9 4.6 L4.4 1.2 L4.4 4 L1.4 7 Z M11.8 4.4 L15.2 1.2 L15.2 4 L11.8 7 Z" fill="#303030"/></svg>
<div class="t" style="left:90px;top:323.19px;font-size:12.3px;line-height:12.3px;color:#ffffff;transform:scaleX(0.925);transform-origin:0 0;">Unfolded Sheet Metal Part161</div>
<div class="a" style="left:59px;top:348px;width:10px;height:1px;border-top:1px dotted #6a6a6a"></div>
<div class="a" style="left:88px;top:338px;width:160px;height:18px;background:#3390f0;"></div>
<svg style="left:69px;top:340px" width="16" height="16" viewBox="0 0 16 16"><path d="M0.7 4.4 L4.6 0.7 L4.6 9.4 L11.6 9.4 L11.6 4.2 L15.4 0.7 L15.4 10.4 L12 14.2 L2.6 14.2 L0.7 11.8 Z" fill="#fff" stroke="#303030" stroke-width="1.3" stroke-linejoin="round"/>
<path d="M0.9 4.6 L4.4 1.2 L4.4 4 L1.4 7 Z M11.8 4.4 L15.2 1.2 L15.2 4 L11.8 7 Z" fill="#303030"/></svg>
<div class="t" style="left:90px;top:341.19px;font-size:12.3px;line-height:12.3px;color:#ffffff;transform:scaleX(0.925);transform-origin:0 0;">Unfolded Sheet Metal Part161</div>
<div class="a" style="left:59px;top:366px;width:10px;height:1px;border-top:1px dotted #6a6a6a"></div>
<div class="a" style="left:88px;top:356px;width:160px;height:18px;background:#3390f0;"></div>
<svg style="left:69px;top:358px" width="16" height="16" viewBox="0 0 16 16"><path d="M0.7 4.4 L4.6 0.7 L4.6 9.4 L11.6 9.4 L11.6 4.2 L15.4 0.7 L15.4 10.4 L12 14.2 L2.6 14.2 L0.7 11.8 Z" fill="#fff" stroke="#303030" stroke-width="1.3" stroke-linejoin="round"/>
<path d="M0.9 4.6 L4.4 1.2 L4.4 4 L1.4 7 Z M11.8 4.4 L15.2 1.2 L15.2 4 L11.8 7 Z" fill="#303030"/></svg>
<div class="t" style="left:90px;top:359.19px;font-size:12.3px;line-height:12.3px;color:#ffffff;transform:scaleX(0.925);transform-origin:0 0;">Unfolded Sheet Metal Part163</div>
<div class="a" style="left:59px;top:384px;width:10px;height:1px;border-top:1px dotted #6a6a6a"></div>
<div class="a" style="left:54px;top:380px;width:9px;height:9px;border:1px solid #919191;background:linear-gradient(#fff,#e8e8e8)"></div>
<svg style="left:54px;top:380px" width="9" height="9" viewBox="0 0 9 9"><path d="M2 4.5 H7 M4.5 2 V7" stroke="#2c3f78" stroke-width="1.2"/></svg>
<svg style="left:69px;top:375px" width="16" height="16" viewBox="0 0 16 16"><path d="M0.7 9 L3.5 6.2 L4 6.2 L4 4 L7 1 L12.3 1 L12.3 4.8 L13.6 5.5 L13.6 11 L9.5 14.6 L0.7 14.6 Z" fill="#2f86f2" stroke="#000" stroke-width="1.4" stroke-linejoin="miter"/>
<rect x="4" y="4" width="5" height="4.6" fill="#3d95fa" stroke="#000" stroke-width="1.3"/>
<path d="M0.7 9 H9.5 V14.6 M9 4 L12.3 1 M9.5 9 L13.6 5.5" fill="none" stroke="#000" stroke-width="1.2"/>
<path d="M2 11.5 H8" stroke="#8fd4ff" stroke-width="1.2"/><path d="M5 5.5 L7.5 6.5" stroke="#9fdcff" stroke-width="1"/><path d="M11 7 V11" stroke="#7cc4ff" stroke-width="1"/></svg>
<div class="t" style="left:90px;top:377.19px;font-size:12.3px;line-height:12.3px;color:#000000;transform:scaleX(0.925);transform-origin:0 0;">Part176</div>
<div class="a" style="left:59px;top:402px;width:10px;height:1px;border-top:1px dotted #6a6a6a"></div>
<div class="a" style="left:54px;top:398px;width:9px;height:9px;border:1px solid #919191;background:linear-gradient(#fff,#e8e8e8)"></div>
<svg style="left:54px;top:398px" width="9" height="9" viewBox="0 0 9 9"><path d="M2 4.5 H7 M4.5 2 V7" stroke="#2c3f78" stroke-width="1.2"/></svg>
<svg style="left:69px;top:393px" width="16" height="16" viewBox="0 0 16 16"><path d="M0.6 1.6 L5.2 0.8 L15.4 5.8 L15.4 14.4 L10 15.8 L0.6 7.8 Z" fill="#f6d41e" stroke="#1234c8" stroke-width="1.2" stroke-linejoin="miter"/>
<path d="M1.2 2 L3.2 2.6 L3.2 8.8 L1.2 7.4 Z" fill="#f8e040"/><path d="M3.2 2.6 V8.8 L9.8 14.6" fill="none" stroke="#1234c8" stroke-width="0.9"/>
<path d="M5.6 3.2 L9.8 2.4 L15 5.4 L15 9.6 L10.2 10.6 L5.6 7.6 Z" fill="#96c6f4" stroke="#1234c8" stroke-width="1.1"/>
<path d="M7.5 4.5 L10 4 L13.5 6 L13.5 8.5 L10.5 9 L7.5 7 Z" fill="#6aa8ea"/>
<path d="M10.2 10.6 L15.4 9.2 L15.4 14.4 L10 15.8 Z" fill="#f2c040" stroke="#1234c8" stroke-width="1.1"/>
<path d="M4.6 0.9 L7 1.8" stroke="#2a7a2a" stroke-width="1"/></svg>
<div class="t" style="left:90px;top:395.19px;font-size:12.3px;line-height:12.3px;color:#000000;transform:scaleX(0.925);transform-origin:0 0;">Assembly12</div>
<div class="a" style="left:59px;top:420px;width:10px;height:1px;border-top:1px dotted #6a6a6a"></div>
<div class="a" style="left:88px;top:410px;width:160px;height:18px;background:#3390f0;"></div>
<svg style="left:69px;top:412px" width="16" height="16" viewBox="0 0 16 16"><path d="M0.7 4.4 L4.6 0.7 L4.6 9.4 L11.6 9.4 L11.6 4.2 L15.4 0.7 L15.4 10.4 L12 14.2 L2.6 14.2 L0.7 11.8 Z" fill="#fff" stroke="#303030" stroke-width="1.3" stroke-linejoin="round"/>
<path d="M0.9 4.6 L4.4 1.2 L4.4 4 L1.4 7 Z M11.8 4.4 L15.2 1.2 L15.2 4 L11.8 7 Z" fill="#303030"/></svg>
<div class="t" style="left:90px;top:413.19px;font-size:12.3px;line-height:12.3px;color:#ffffff;transform:scaleX(0.925);transform-origin:0 0;">Unfolded Sheet Metal Part149</div>
<div class="a" style="left:59px;top:438px;width:10px;height:1px;border-top:1px dotted #6a6a6a"></div>
<div class="a" style="left:54px;top:434px;width:9px;height:9px;border:1px solid #919191;background:linear-gradient(#fff,#e8e8e8)"></div>
<svg style="left:54px;top:434px" width="9" height="9" viewBox="0 0 9 9"><path d="M2 4.5 H7 M4.5 2 V7" stroke="#2c3f78" stroke-width="1.2"/></svg>
<svg style="left:69px;top:430px" width="16" height="16" viewBox="0 0 16 16"><path d="M0.7 4.4 L4.6 0.7 L4.6 9.4 L11.6 9.4 L11.6 4.2 L15.4 0.7 L15.4 10.4 L12 14.2 L2.6 14.2 L0.7 11.8 Z" fill="#1c94ea" stroke="#000" stroke-width="1.4" stroke-linejoin="round"/>
<path d="M4.6 9.4 L1.6 12.4 M11.6 9.4 L12 14" stroke="#000" stroke-width="1"/>
<path d="M1.8 11 L3.8 12.6" stroke="#ffb400" stroke-width="2.2"/><path d="M12.6 11.6 L14.6 9" stroke="#ff9a00" stroke-width="1.8"/><path d="M6 11.8 H10.5" stroke="#7fd0ff" stroke-width="1.4"/></svg>
<div class="t" style="left:90px;top:431.19px;font-size:12.3px;line-height:12.3px;color:#000000;transform:scaleX(0.925);transform-origin:0 0;">Sheet Metal Part156</div>
<div class="a" style="left:59px;top:456px;width:10px;height:1px;border-top:1px dotted #6a6a6a"></div>
<div class="a" style="left:54px;top:452px;width:9px;height:9px;border:1px solid #919191;background:linear-gradient(#fff,#e8e8e8)"></div>
<svg style="left:54px;top:452px" width="9" height="9" viewBox="0 0 9 9"><path d="M2 4.5 H7 M4.5 2 V7" stroke="#2c3f78" stroke-width="1.2"/></svg>
<svg style="left:69px;top:447px" width="16" height="16" viewBox="0 0 16 16"><path d="M0.6 1.6 L5.2 0.8 L15.4 5.8 L15.4 14.4 L10 15.8 L0.6 7.8 Z" fill="#f6d41e" stroke="#1234c8" stroke-width="1.2" stroke-linejoin="miter"/>
<path d="M1.2 2 L3.2 2.6 L3.2 8.8 L1.2 7.4 Z" fill="#f8e040"/><path d="M3.2 2.6 V8.8 L9.8 14.6" fill="none" stroke="#1234c8" stroke-width="0.9"/>
<path d="M5.6 3.2 L9.8 2.4 L15 5.4 L15 9.6 L10.2 10.6 L5.6 7.6 Z" fill="#96c6f4" stroke="#1234c8" stroke-width="1.1"/>
<path d="M7.5 4.5 L10 4 L13.5 6 L13.5 8.5 L10.5 9 L7.5 7 Z" fill="#6aa8ea"/>
<path d="M10.2 10.6 L15.4 9.2 L15.4 14.4 L10 15.8 Z" fill="#f2c040" stroke="#1234c8" stroke-width="1.1"/>
<path d="M4.6 0.9 L7 1.8" stroke="#2a7a2a" stroke-width="1"/></svg>
<div class="t" style="left:90px;top:449.19px;font-size:12.3px;line-height:12.3px;color:#000000;transform:scaleX(0.925);transform-origin:0 0;">Assembly26</div>
<div class="a" style="left:59px;top:474px;width:10px;height:1px;border-top:1px dotted #6a6a6a"></div>
<div class="a" style="left:54px;top:470px;width:9px;height:9px;border:1px solid #919191;background:linear-gradient(#fff,#e8e8e8)"></div>
<svg style="left:54px;top:470px" width="9" height="9" viewBox="0 0 9 9"><path d="M2 4.5 H7 M4.5 2 V7" stroke="#2c3f78" stroke-width="1.2"/></svg>
<svg style="left:69px;top:465px" width="16" height="16" viewBox="0 0 16 16"><path d="M0.6 1.6 L5.2 0.8 L15.4 5.8 L15.4 14.4 L10 15.8 L0.6 7.8 Z" fill="#f6d41e" stroke="#1234c8" stroke-width="1.2" stroke-linejoin="miter"/>
<path d="M1.2 2 L3.2 2.6 L3.2 8.8 L1.2 7.4 Z" fill="#f8e040"/><path d="M3.2 2.6 V8.8 L9.8 14.6" fill="none" stroke="#1234c8" stroke-width="0.9"/>
<path d="M5.6 3.2 L9.8 2.4 L15 5.4 L15 9.6 L10.2 10.6 L5.6 7.6 Z" fill="#96c6f4" stroke="#1234c8" stroke-width="1.1"/>
<path d="M7.5 4.5 L10 4 L13.5 6 L13.5 8.5 L10.5 9 L7.5 7 Z" fill="#6aa8ea"/>
<path d="M10.2 10.6 L15.4 9.2 L15.4 14.4 L10 15.8 Z" fill="#f2c040" stroke="#1234c8" stroke-width="1.1"/>
<path d="M4.6 0.9 L7 1.8" stroke="#2a7a2a" stroke-width="1"/></svg>
<div class="t" style="left:90px;top:467.19px;font-size:12.3px;line-height:12.3px;color:#000000;transform:scaleX(0.925);transform-origin:0 0;">Assembly29</div>
<div class="a" style="left:59px;top:492px;width:10px;height:1px;border-top:1px dotted #6a6a6a"></div>
<div class="a" style="left:54px;top:488px;width:9px;height:9px;border:1px solid #919191;background:linear-gradient(#fff,#e8e8e8)"></div>
<svg style="left:54px;top:488px" width="9" height="9" viewBox="0 0 9 9"><path d="M2 4.5 H7 M4.5 2 V7" stroke="#2c3f78" stroke-width="1.2"/></svg>
<svg style="left:69px;top:483px" width="16" height="16" viewBox="0 0 16 16"><path d="M0.6 1.6 L5.2 0.8 L15.4 5.8 L15.4 14.4 L10 15.8 L0.6 7.8 Z" fill="#f6d41e" stroke="#1234c8" stroke-width="1.2" stroke-linejoin="miter"/>
<path d="M1.2 2 L3.2 2.6 L3.2 8.8 L1.2 7.4 Z" fill="#f8e040"/><path d="M3.2 2.6 V8.8 L9.8 14.6" fill="none" stroke="#1234c8" stroke-width="0.9"/>
<path d="M5.6 3.2 L9.8 2.4 L15 5.4 L15 9.6 L10.2 10.6 L5.6 7.6 Z" fill="#96c6f4" stroke="#1234c8" stroke-width="1.1"/>
<path d="M7.5 4.5 L10 4 L13.5 6 L13.5 8.5 L10.5 9 L7.5 7 Z" fill="#6aa8ea"/>
<path d="M10.2 10.6 L15.4 9.2 L15.4 14.4 L10 15.8 Z" fill="#f2c040" stroke="#1234c8" stroke-width="1.1"/>
<path d="M4.6 0.9 L7 1.8" stroke="#2a7a2a" stroke-width="1"/></svg>
<div class="t" style="left:90px;top:485.19px;font-size:12.3px;line-height:12.3px;color:#000000;transform:scaleX(0.925);transform-origin:0 0;">Assembly42</div>
<div class="a" style="left:59px;top:510px;width:10px;height:1px;border-top:1px dotted #6a6a6a"></div>
<div class="a" style="left:54px;top:506px;width:9px;height:9px;border:1px solid #919191;background:linear-gradient(#fff,#e8e8e8)"></div>
<svg style="left:54px;top:506px" width="9" height="9" viewBox="0 0 9 9"><path d="M2 4.5 H7 M4.5 2 V7" stroke="#2c3f78" stroke-width="1.2"/></svg>
<svg style="left:69px;top:501px" width="16" height="16" viewBox="0 0 16 16"><path d="M0.6 1.6 L5.2 0.8 L15.4 5.8 L15.4 14.4 L10 15.8 L0.6 7.8 Z" fill="#f6d41e" stroke="#1234c8" stroke-width="1.2" stroke-linejoin="miter"/>
<path d="M1.2 2 L3.2 2.6 L3.2 8.8 L1.2 7.4 Z" fill="#f8e040"/><path d="M3.2 2.6 V8.8 L9.8 14.6" fill="none" stroke="#1234c8" stroke-width="0.9"/>
<path d="M5.6 3.2 L9.8 2.4 L15 5.4 L15 9.6 L10.2 10.6 L5.6 7.6 Z" fill="#96c6f4" stroke="#1234c8" stroke-width="1.1"/>
<path d="M7.5 4.5 L10 4 L13.5 6 L13.5 8.5 L10.5 9 L7.5 7 Z" fill="#6aa8ea"/>
<path d="M10.2 10.6 L15.4 9.2 L15.4 14.4 L10 15.8 Z" fill="#f2c040" stroke="#1234c8" stroke-width="1.1"/>
<path d="M4.6 0.9 L7 1.8" stroke="#2a7a2a" stroke-width="1"/></svg>
<div class="t" style="left:90px;top:503.19px;font-size:12.3px;line-height:12.3px;color:#000000;transform:scaleX(0.925);transform-origin:0 0;">Assembly49</div>
<div class="a" style="left:59px;top:528px;width:10px;height:1px;border-top:1px dotted #6a6a6a"></div>
<div class="a" style="left:54px;top:524px;width:9px;height:9px;border:1px solid #919191;background:linear-gradient(#fff,#e8e8e8)"></div>
<svg style="left:54px;top:524px" width="9" height="9" viewBox="0 0 9 9"><path d="M2 4.5 H7 M4.5 2 V7" stroke="#2c3f78" stroke-width="1.2"/></svg>
<svg style="left:69px;top:519px" width="16" height="16" viewBox="0 0 16 16"><path d="M0.6 1.6 L5.2 0.8 L15.4 5.8 L15.4 14.4 L10 15.8 L0.6 7.8 Z" fill="#f6d41e" stroke="#1234c8" stroke-width="1.2" stroke-linejoin="miter"/>
<path d="M1.2 2 L3.2 2.6 L3.2 8.8 L1.2 7.4 Z" fill="#f8e040"/><path d="M3.2 2.6 V8.8 L9.8 14.6" fill="none" stroke="#1234c8" stroke-width="0.9"/>
<path d="M5.6 3.2 L9.8 2.4 L15 5.4 L15 9.6 L10.2 10.6 L5.6 7.6 Z" fill="#96c6f4" stroke="#1234c8" stroke-width="1.1"/>
<path d="M7.5 4.5 L10 4 L13.5 6 L13.5 8.5 L10.5 9 L7.5 7 Z" fill="#6aa8ea"/>
<path d="M10.2 10.6 L15.4 9.2 L15.4 14.4 L10 15.8 Z" fill="#f2c040" stroke="#1234c8" stroke-width="1.1"/>
<path d="M4.6 0.9 L7 1.8" stroke="#2a7a2a" stroke-width="1"/></svg>
<div class="t" style="left:90px;top:521.19px;font-size:12.3px;line-height:12.3px;color:#000000;transform:scaleX(0.925);transform-origin:0 0;">Assembly46</div>
<div class="a" style="left:59px;top:546px;width:10px;height:1px;border-top:1px dotted #6a6a6a"></div>
<div class="a" style="left:54px;top:542px;width:9px;height:9px;border:1px solid #919191;background:linear-gradient(#fff,#e8e8e8)"></div>
<svg style="left:54px;top:542px" width="9" height="9" viewBox="0 0 9 9"><path d="M2 4.5 H7 M4.5 2 V7" stroke="#2c3f78" stroke-width="1.2"/></svg>
<svg style="left:69px;top:537px" width="16" height="16" viewBox="0 0 16 16"><path d="M0.7 9 L3.5 6.2 L4 6.2 L4 4 L7 1 L12.3 1 L12.3 4.8 L13.6 5.5 L13.6 11 L9.5 14.6 L0.7 14.6 Z" fill="#2f86f2" stroke="#000" stroke-width="1.4" stroke-linejoin="miter"/>
<rect x="4" y="4" width="5" height="4.6" fill="#3d95fa" stroke="#000" stroke-width="1.3"/>
<path d="M0.7 9 H9.5 V14.6 M9 4 L12.3 1 M9.5 9 L13.6 5.5" fill="none" stroke="#000" stroke-width="1.2"/>
<path d="M2 11.5 H8" stroke="#8fd4ff" stroke-width="1.2"/><path d="M5 5.5 L7.5 6.5" stroke="#9fdcff" stroke-width="1"/><path d="M11 7 V11" stroke="#7cc4ff" stroke-width="1"/></svg>
<div class="t" style="left:90px;top:539.19px;font-size:12.3px;line-height:12.3px;color:#000000;transform:scaleX(0.925);transform-origin:0 0;">Part336</div>
<div class="a" style="left:59px;top:564px;width:10px;height:1px;border-top:1px dotted #6a6a6a"></div>
<div class="a" style="left:54px;top:560px;width:9px;height:9px;border:1px solid #919191;background:linear-gradient(#fff,#e8e8e8)"></div>
<svg style="left:54px;top:560px" width="9" height="9" viewBox="0 0 9 9"><path d="M2 4.5 H7 M4.5 2 V7" stroke="#2c3f78" stroke-width="1.2"/></svg>
<svg style="left:69px;top:555px" width="16" height="16" viewBox="0 0 16 16"><path d="M0.7 9 L3.5 6.2 L4 6.2 L4 4 L7 1 L12.3 1 L12.3 4.8 L13.6 5.5 L13.6 11 L9.5 14.6 L0.7 14.6 Z" fill="#2f86f2" stroke="#000" stroke-width="1.4" stroke-linejoin="miter"/>
<rect x="4" y="4" width="5" height="4.6" fill="#3d95fa" stroke="#000" stroke-width="1.3"/>
<path d="M0.7 9 H9.5 V14.6 M9 4 L12.3 1 M9.5 9 L13.6 5.5" fill="none" stroke="#000" stroke-width="1.2"/>
<path d="M2 11.5 H8" stroke="#8fd4ff" stroke-width="1.2"/><path d="M5 5.5 L7.5 6.5" stroke="#9fdcff" stroke-width="1"/><path d="M11 7 V11" stroke="#7cc4ff" stroke-width="1"/></svg>
<div class="t" style="left:90px;top:557.19px;font-size:12.3px;line-height:12.3px;color:#000000;transform:scaleX(0.925);transform-origin:0 0;">Part333</div>
<div class="a" style="left:59px;top:582px;width:10px;height:1px;border-top:1px dotted #6a6a6a"></div>
<div class="a" style="left:54px;top:578px;width:9px;height:9px;border:1px solid #919191;background:linear-gradient(#fff,#e8e8e8)"></div>
<svg style="left:54px;top:578px" width="9" height="9" viewBox="0 0 9 9"><path d="M2 4.5 H7 M4.5 2 V7" stroke="#2c3f78" stroke-width="1.2"/></svg>
<svg style="left:69px;top:573px" width="16" height="16" viewBox="0 0 16 16"><path d="M0.7 9 L3.5 6.2 L4 6.2 L4 4 L7 1 L12.3 1 L12.3 4.8 L13.6 5.5 L13.6 11 L9.5 14.6 L0.7 14.6 Z" fill="#2f86f2" stroke="#000" stroke-width="1.4" stroke-linejoin="miter"/>
<rect x="4" y="4" width="5" height="4.6" fill="#3d95fa" stroke="#000" stroke-width="1.3"/>
<path d="M0.7 9 H9.5 V14.6 M9 4 L12.3 1 M9.5 9 L13.6 5.5" fill="none" stroke="#000" stroke-width="1.2"/>
<path d="M2 11.5 H8" stroke="#8fd4ff" stroke-width="1.2"/><path d="M5 5.5 L7.5 6.5" stroke="#9fdcff" stroke-width="1"/><path d="M11 7 V11" stroke="#7cc4ff" stroke-width="1"/></svg>
<div class="t" style="left:90px;top:575.19px;font-size:12.3px;line-height:12.3px;color:#000000;transform:scaleX(0.925);transform-origin:0 0;">Part336</div>
<div class="a" style="left:59px;top:600px;width:10px;height:1px;border-top:1px dotted #6a6a6a"></div>
<div class="a" style="left:54px;top:596px;width:9px;height:9px;border:1px solid #919191;background:linear-gradient(#fff,#e8e8e8)"></div>
<svg style="left:54px;top:596px" width="9" height="9" viewBox="0 0 9 9"><path d="M2 4.5 H7 M4.5 2 V7" stroke="#2c3f78" stroke-width="1.2"/></svg>
<svg style="left:69px;top:591px" width="16" height="16" viewBox="0 0 16 16"><path d="M0.7 9 L3.5 6.2 L4 6.2 L4 4 L7 1 L12.3 1 L12.3 4.8 L13.6 5.5 L13.6 11 L9.5 14.6 L0.7 14.6 Z" fill="#2f86f2" stroke="#000" stroke-width="1.4" stroke-linejoin="miter"/>
<rect x="4" y="4" width="5" height="4.6" fill="#3d95fa" stroke="#000" stroke-width="1.3"/>
<path d="M0.7 9 H9.5 V14.6 M9 4 L12.3 1 M9.5 9 L13.6 5.5" fill="none" stroke="#000" stroke-width="1.2"/>
<path d="M2 11.5 H8" stroke="#8fd4ff" stroke-width="1.2"/><path d="M5 5.5 L7.5 6.5" stroke="#9fdcff" stroke-width="1"/><path d="M11 7 V11" stroke="#7cc4ff" stroke-width="1"/></svg>
<div class="t" style="left:90px;top:593.19px;font-size:12.3px;line-height:12.3px;color:#000000;transform:scaleX(0.925);transform-origin:0 0;">Part333</div>
<div class="a" style="left:59px;top:618px;width:10px;height:1px;border-top:1px dotted #6a6a6a"></div>
<div class="a" style="left:54px;top:614px;width:9px;height:9px;border:1px solid #919191;background:linear-gradient(#fff,#e8e8e8)"></div>
<svg style="left:54px;top:614px" width="9" height="9" viewBox="0 0 9 9"><path d="M2 4.5 H7 M4.5 2 V7" stroke="#2c3f78" stroke-width="1.2"/></svg>
<svg style="left:69px;top:609px" width="16" height="16" viewBox="0 0 16 16"><path d="M0.7 9 L3.5 6.2 L4 6.2 L4 4 L7 1 L12.3 1 L12.3 4.8 L13.6 5.5 L13.6 11 L9.5 14.6 L0.7 14.6 Z" fill="#2f86f2" stroke="#000" stroke-width="1.4" stroke-linejoin="miter"/>
<rect x="4" y="4" width="5" height="4.6" fill="#3d95fa" stroke="#000" stroke-width="1.3"/>
<path d="M0.7 9 H9.5 V14.6 M9 4 L12.3 1 M9.5 9 L13.6 5.5" fill="none" stroke="#000" stroke-width="1.2"/>
<path d="M2 11.5 H8" stroke="#8fd4ff" stroke-width="1.2"/><path d="M5 5.5 L7.5 6.5" stroke="#9fdcff" stroke-width="1"/><path d="M11 7 V11" stroke="#7cc4ff" stroke-width="1"/></svg>
<div class="t" style="left:90px;top:611.19px;font-size:12.3px;line-height:12.3px;color:#000000;transform:scaleX(0.925);transform-origin:0 0;">Part336</div>
<div class="a" style="left:59px;top:636px;width:10px;height:1px;border-top:1px dotted #6a6a6a"></div>
<div class="a" style="left:54px;top:632px;width:9px;height:9px;border:1px solid #919191;background:linear-gradient(#fff,#e8e8e8)"></div>
<svg style="left:54px;top:632px" width="9" height="9" viewBox="0 0 9 9"><path d="M2 4.5 H7 M4.5 2 V7" stroke="#2c3f78" stroke-width="1.2"/></svg>
<svg style="left:69px;top:627px" width="16" height="16" viewBox="0 0 16 16"><path d="M0.7 9 L3.5 6.2 L4 6.2 L4 4 L7 1 L12.3 1 L12.3 4.8 L13.6 5.5 L13.6 11 L9.5 14.6 L0.7 14.6 Z" fill="#2f86f2" stroke="#000" stroke-width="1.4" stroke-linejoin="miter"/>
<rect x="4" y="4" width="5" height="4.6" fill="#3d95fa" stroke="#000" stroke-width="1.3"/>
<path d="M0.7 9 H9.5 V14.6 M9 4 L12.3 1 M9.5 9 L13.6 5.5" fill="none" stroke="#000" stroke-width="1.2"/>
<path d="M2 11.5 H8" stroke="#8fd4ff" stroke-width="1.2"/><path d="M5 5.5 L7.5 6.5" stroke="#9fdcff" stroke-width="1"/><path d="M11 7 V11" stroke="#7cc4ff" stroke-width="1"/></svg>
<div class="t" style="left:90px;top:629.19px;font-size:12.3px;line-height:12.3px;color:#000000;transform:scaleX(0.925);transform-origin:0 0;">Part336</div>
<div class="a" style="left:59px;top:654px;width:10px;height:1px;border-top:1px dotted #6a6a6a"></div>
<div class="a" style="left:54px;top:650px;width:9px;height:9px;border:1px solid #919191;background:linear-gradient(#fff,#e8e8e8)"></div>
<svg style="left:54px;top:650px" width="9" height="9" viewBox="0 0 9 9"><path d="M2 4.5 H7 M4.5 2 V7" stroke="#2c3f78" stroke-width="1.2"/></svg>
<svg style="left:69px;top:645px" width="16" height="16" viewBox="0 0 16 16"><path d="M0.6 1.6 L5.2 0.8 L15.4 5.8 L15.4 14.4 L10 15.8 L0.6 7.8 Z" fill="#f6d41e" stroke="#1234c8" stroke-width="1.2" stroke-linejoin="miter"/>
<path d="M1.2 2 L3.2 2.6 L3.2 8.8 L1.2 7.4 Z" fill="#f8e040"/><path d="M3.2 2.6 V8.8 L9.8 14.6" fill="none" stroke="#1234c8" stroke-width="0.9"/>
<path d="M5.6 3.2 L9.8 2.4 L15 5.4 L15 9.6 L10.2 10.6 L5.6 7.6 Z" fill="#96c6f4" stroke="#1234c8" stroke-width="1.1"/>
<path d="M7.5 4.5 L10 4 L13.5 6 L13.5 8.5 L10.5 9 L7.5 7 Z" fill="#6aa8ea"/>
<path d="M10.2 10.6 L15.4 9.2 L15.4 14.4 L10 15.8 Z" fill="#f2c040" stroke="#1234c8" stroke-width="1.1"/>
<path d="M4.6 0.9 L7 1.8" stroke="#2a7a2a" stroke-width="1"/></svg>
<div class="t" style="left:90px;top:647.19px;font-size:12.3px;line-height:12.3px;color:#000000;transform:scaleX(0.925);transform-origin:0 0;">Assembly64</div>
<div class="a" style="left:59px;top:672px;width:10px;height:1px;border-top:1px dotted #6a6a6a"></div>
<div class="a" style="left:54px;top:668px;width:9px;height:9px;border:1px solid #919191;background:linear-gradient(#fff,#e8e8e8)"></div>
<svg style="left:54px;top:668px" width="9" height="9" viewBox="0 0 9 9"><path d="M2 4.5 H7 M4.5 2 V7" stroke="#2c3f78" stroke-width="1.2"/></svg>
<svg style="left:69px;top:663px" width="16" height="16" viewBox="0 0 16 16"><path d="M0.7 9 L3.5 6.2 L4 6.2 L4 4 L7 1 L12.3 1 L12.3 4.8 L13.6 5.5 L13.6 11 L9.5 14.6 L0.7 14.6 Z" fill="#2f86f2" stroke="#000" stroke-width="1.4" stroke-linejoin="miter"/>
<rect x="4" y="4" width="5" height="4.6" fill="#3d95fa" stroke="#000" stroke-width="1.3"/>
<path d="M0.7 9 H9.5 V14.6 M9 4 L12.3 1 M9.5 9 L13.6 5.5" fill="none" stroke="#000" stroke-width="1.2"/>
<path d="M2 11.5 H8" stroke="#8fd4ff" stroke-width="1.2"/><path d="M5 5.5 L7.5 6.5" stroke="#9fdcff" stroke-width="1"/><path d="M11 7 V11" stroke="#7cc4ff" stroke-width="1"/></svg>
<div class="t" style="left:90px;top:665.19px;font-size:12.3px;line-height:12.3px;color:#000000;transform:scaleX(0.925);transform-origin:0 0;">Part342</div>
<div class="a" style="left:59px;top:690px;width:10px;height:1px;border-top:1px dotted #6a6a6a"></div>
<div class="a" style="left:54px;top:686px;width:9px;height:9px;border:1px solid #919191;background:linear-gradient(#fff,#e8e8e8)"></div>
<svg style="left:54px;top:686px" width="9" height="9" viewBox="0 0 9 9"><path d="M2 4.5 H7 M4.5 2 V7" stroke="#2c3f78" stroke-width="1.2"/></svg>
<svg style="left:69px;top:681px" width="16" height="16" viewBox="0 0 16 16"><path d="M0.7 9 L3.5 6.2 L4 6.2 L4 4 L7 1 L12.3 1 L12.3 4.8 L13.6 5.5 L13.6 11 L9.5 14.6 L0.7 14.6 Z" fill="#2f86f2" stroke="#000" stroke-width="1.4" stroke-linejoin="miter"/>
<rect x="4" y="4" width="5" height="4.6" fill="#3d95fa" stroke="#000" stroke-width="1.3"/>
<path d="M0.7 9 H9.5 V14.6 M9 4 L12.3 1 M9.5 9 L13.6 5.5" fill="none" stroke="#000" stroke-width="1.2"/>
<path d="M2 11.5 H8" stroke="#8fd4ff" stroke-width="1.2"/><path d="M5 5.5 L7.5 6.5" stroke="#9fdcff" stroke-width="1"/><path d="M11 7 V11" stroke="#7cc4ff" stroke-width="1"/></svg>
<div class="t" style="left:90px;top:683.19px;font-size:12.3px;line-height:12.3px;color:#000000;transform:scaleX(0.925);transform-origin:0 0;">Part341</div>
<div class="a" style="left:59px;top:708px;width:10px;height:1px;border-top:1px dotted #6a6a6a"></div>
<div class="a" style="left:54px;top:704px;width:9px;height:9px;border:1px solid #919191;background:linear-gradient(#fff,#e8e8e8)"></div>
<svg style="left:54px;top:704px" width="9" height="9" viewBox="0 0 9 9"><path d="M2 4.5 H7 M4.5 2 V7" stroke="#2c3f78" stroke-width="1.2"/></svg>
<svg style="left:69px;top:699px" width="16" height="16" viewBox="0 0 16 16"><path d="M0.7 9 L3.5 6.2 L4 6.2 L4 4 L7 1 L12.3 1 L12.3 4.8 L13.6 5.5 L13.6 11 L9.5 14.6 L0.7 14.6 Z" fill="#2f86f2" stroke="#000" stroke-width="1.4" stroke-linejoin="miter"/>
<rect x="4" y="4" width="5" height="4.6" fill="#3d95fa" stroke="#000" stroke-width="1.3"/>
<path d="M0.7 9 H9.5 V14.6 M9 4 L12.3 1 M9.5 9 L13.6 5.5" fill="none" stroke="#000" stroke-width="1.2"/>
<path d="M2 11.5 H8" stroke="#8fd4ff" stroke-width="1.2"/><path d="M5 5.5 L7.5 6.5" stroke="#9fdcff" stroke-width="1"/><path d="M11 7 V11" stroke="#7cc4ff" stroke-width="1"/></svg>
<div class="t" style="left:90px;top:701.19px;font-size:12.3px;line-height:12.3px;color:#000000;transform:scaleX(0.925);transform-origin:0 0;">Part348</div>
<div class="a" style="left:59px;top:726px;width:10px;height:1px;border-top:1px dotted #6a6a6a"></div>
<div class="a" style="left:54px;top:722px;width:9px;height:9px;border:1px solid #919191;background:linear-gradient(#fff,#e8e8e8)"></div>
<svg style="left:54px;top:722px" width="9" height="9" viewBox="0 0 9 9"><path d="M2 4.5 H7 M4.5 2 V7" stroke="#2c3f78" stroke-width="1.2"/></svg>
<svg style="left:69px;top:717px" width="16" height="16" viewBox="0 0 16 16"><path d="M0.7 9 L3.5 6.2 L4 6.2 L4 4 L7 1 L12.3 1 L12.3 4.8 L13.6 5.5 L13.6 11 L9.5 14.6 L0.7 14.6 Z" fill="#2f86f2" stroke="#000" stroke-width="1.4" stroke-linejoin="miter"/>
<rect x="4" y="4" width="5" height="4.6" fill="#3d95fa" stroke="#000" stroke-width="1.3"/>
<path d="M0.7 9 H9.5 V14.6 M9 4 L12.3 1 M9.5 9 L13.6 5.5" fill="none" stroke="#000" stroke-width="1.2"/>
<path d="M2 11.5 H8" stroke="#8fd4ff" stroke-width="1.2"/><path d="M5 5.5 L7.5 6.5" stroke="#9fdcff" stroke-width="1"/><path d="M11 7 V11" stroke="#7cc4ff" stroke-width="1"/></svg>
<div class="t" style="left:90px;top:719.19px;font-size:12.3px;line-height:12.3px;color:#000000;transform:scaleX(0.925);transform-origin:0 0;">Part336</div>
<div class="a" style="left:59px;top:744px;width:10px;height:1px;border-top:1px dotted #6a6a6a"></div>
<div class="a" style="left:54px;top:740px;width:9px;height:9px;border:1px solid #919191;background:linear-gradient(#fff,#e8e8e8)"></div>
<svg style="left:54px;top:740px" width="9" height="9" viewBox="0 0 9 9"><path d="M2 4.5 H7 M4.5 2 V7" stroke="#2c3f78" stroke-width="1.2"/></svg>
<svg style="left:69px;top:735px" width="16" height="16" viewBox="0 0 16 16"><path d="M0.7 9 L3.5 6.2 L4 6.2 L4 4 L7 1 L12.3 1 L12.3 4.8 L13.6 5.5 L13.6 11 L9.5 14.6 L0.7 14.6 Z" fill="#2f86f2" stroke="#000" stroke-width="1.4" stroke-linejoin="miter"/>
<rect x="4" y="4" width="5" height="4.6" fill="#3d95fa" stroke="#000" stroke-width="1.3"/>
<path d="M0.7 9 H9.5 V14.6 M9 4 L12.3 1 M9.5 9 L13.6 5.5" fill="none" stroke="#000" stroke-width="1.2"/>
<path d="M2 11.5 H8" stroke="#8fd4ff" stroke-width="1.2"/><path d="M5 5.5 L7.5 6.5" stroke="#9fdcff" stroke-width="1"/><path d="M11 7 V11" stroke="#7cc4ff" stroke-width="1"/></svg>
<div class="t" style="left:90px;top:737.19px;font-size:12.3px;line-height:12.3px;color:#000000;transform:scaleX(0.925);transform-origin:0 0;">Part333</div>
<div class="a" style="left:59px;top:762px;width:10px;height:1px;border-top:1px dotted #6a6a6a"></div>
<div class="a" style="left:54px;top:758px;width:9px;height:9px;border:1px solid #919191;background:linear-gradient(#fff,#e8e8e8)"></div>
<svg style="left:54px;top:758px" width="9" height="9" viewBox="0 0 9 9"><path d="M2 4.5 H7 M4.5 2 V7" stroke="#2c3f78" stroke-width="1.2"/></svg>
<svg style="left:69px;top:753px" width="16" height="16" viewBox="0 0 16 16"><path d="M0.7 9 L3.5 6.2 L4 6.2 L4 4 L7 1 L12.3 1 L12.3 4.8 L13.6 5.5 L13.6 11 L9.5 14.6 L0.7 14.6 Z" fill="#2f86f2" stroke="#000" stroke-width="1.4" stroke-linejoin="miter"/>
<rect x="4" y="4" width="5" height="4.6" fill="#3d95fa" stroke="#000" stroke-width="1.3"/>
<path d="M0.7 9 H9.5 V14.6 M9 4 L12.3 1 M9.5 9 L13.6 5.5" fill="none" stroke="#000" stroke-width="1.2"/>
<path d="M2 11.5 H8" stroke="#8fd4ff" stroke-width="1.2"/><path d="M5 5.5 L7.5 6.5" stroke="#9fdcff" stroke-width="1"/><path d="M11 7 V11" stroke="#7cc4ff" stroke-width="1"/></svg>
<div class="t" style="left:90px;top:755.19px;font-size:12.3px;line-height:12.3px;color:#000000;transform:scaleX(0.925);transform-origin:0 0;">Part336</div>
<div class="a" style="left:59px;top:780px;width:10px;height:1px;border-top:1px dotted #6a6a6a"></div>
<div class="a" style="left:54px;top:776px;width:9px;height:9px;border:1px solid #919191;background:linear-gradient(#fff,#e8e8e8)"></div>
<svg style="left:54px;top:776px" width="9" height="9" viewBox="0 0 9 9"><path d="M2 4.5 H7 M4.5 2 V7" stroke="#2c3f78" stroke-width="1.2"/></svg>
<svg style="left:69px;top:771px" width="16" height="16" viewBox="0 0 16 16"><path d="M0.7 9 L3.5 6.2 L4 6.2 L4 4 L7 1 L12.3 1 L12.3 4.8 L13.6 5.5 L13.6 11 L9.5 14.6 L0.7 14.6 Z" fill="#2f86f2" stroke="#000" stroke-width="1.4" stroke-linejoin="miter"/>
<rect x="4" y="4" width="5" height="4.6" fill="#3d95fa" stroke="#000" stroke-width="1.3"/>
<path d="M0.7 9 H9.5 V14.6 M9 4 L12.3 1 M9.5 9 L13.6 5.5" fill="none" stroke="#000" stroke-width="1.2"/>
<path d="M2 11.5 H8" stroke="#8fd4ff" stroke-width="1.2"/><path d="M5 5.5 L7.5 6.5" stroke="#9fdcff" stroke-width="1"/><path d="M11 7 V11" stroke="#7cc4ff" stroke-width="1"/></svg>
<div class="t" style="left:90px;top:773.19px;font-size:12.3px;line-height:12.3px;color:#000000;transform:scaleX(0.925);transform-origin:0 0;">Part333</div>
<div class="a" style="left:59px;top:798px;width:10px;height:1px;border-top:1px dotted #6a6a6a"></div>
<div class="a" style="left:54px;top:794px;width:9px;height:9px;border:1px solid #919191;background:linear-gradient(#fff,#e8e8e8)"></div>
<svg style="left:54px;top:794px" width="9" height="9" viewBox="0 0 9 9"><path d="M2 4.5 H7 M4.5 2 V7" stroke="#2c3f78" stroke-width="1.2"/></svg>
<svg style="left:69px;top:789px" width="16" height="16" viewBox="0 0 16 16"><path d="M0.7 9 L3.5 6.2 L4 6.2 L4 4 L7 1 L12.3 1 L12.3 4.8 L13.6 5.5 L13.6 11 L9.5 14.6 L0.7 14.6 Z" fill="#2f86f2" stroke="#000" stroke-width="1.4" stroke-linejoin="miter"/>
<rect x="4" y="4" width="5" height="4.6" fill="#3d95fa" stroke="#000" stroke-width="1.3"/>
<path d="M0.7 9 H9.5 V14.6 M9 4 L12.3 1 M9.5 9 L13.6 5.5" fill="none" stroke="#000" stroke-width="1.2"/>
<path d="M2 11.5 H8" stroke="#8fd4ff" stroke-width="1.2"/><path d="M5 5.5 L7.5 6.5" stroke="#9fdcff" stroke-width="1"/><path d="M11 7 V11" stroke="#7cc4ff" stroke-width="1"/></svg>
<div class="t" style="left:90px;top:791.19px;font-size:12.3px;line-height:12.3px;color:#000000;transform:scaleX(0.925);transform-origin:0 0;">Part336</div>
<div class="a" style="left:59px;top:816px;width:10px;height:1px;border-top:1px dotted #6a6a6a"></div>
<div class="a" style="left:54px;top:812px;width:9px;height:9px;border:1px solid #919191;background:linear-gradient(#fff,#e8e8e8)"></div>
<svg style="left:54px;top:812px" width="9" height="9" viewBox="0 0 9 9"><path d="M2 4.5 H7 M4.5 2 V7" stroke="#2c3f78" stroke-width="1.2"/></svg>
<svg style="left:69px;top:807px" width="16" height="16" viewBox="0 0 16 16"><path d="M0.7 9 L3.5 6.2 L4 6.2 L4 4 L7 1 L12.3 1 L12.3 4.8 L13.6 5.5 L13.6 11 L9.5 14.6 L0.7 14.6 Z" fill="#2f86f2" stroke="#000" stroke-width="1.4" stroke-linejoin="miter"/>
<rect x="4" y="4" width="5" height="4.6" fill="#3d95fa" stroke="#000" stroke-width="1.3"/>
<path d="M0.7 9 H9.5 V14.6 M9 4 L12.3 1 M9.5 9 L13.6 5.5" fill="none" stroke="#000" stroke-width="1.2"/>
<path d="M2 11.5 H8" stroke="#8fd4ff" stroke-width="1.2"/><path d="M5 5.5 L7.5 6.5" stroke="#9fdcff" stroke-width="1"/><path d="M11 7 V11" stroke="#7cc4ff" stroke-width="1"/></svg>
<div class="t" style="left:90px;top:809.19px;font-size:12.3px;line-height:12.3px;color:#000000;transform:scaleX(0.925);transform-origin:0 0;">Part336</div>
<div class="a" style="left:59px;top:834px;width:10px;height:1px;border-top:1px dotted #6a6a6a"></div>
<div class="a" style="left:54px;top:830px;width:9px;height:9px;border:1px solid #919191;background:linear-gradient(#fff,#e8e8e8)"></div>
<svg style="left:54px;top:830px" width="9" height="9" viewBox="0 0 9 9"><path d="M2 4.5 H7 M4.5 2 V7" stroke="#2c3f78" stroke-width="1.2"/></svg>
<svg style="left:69px;top:825px" width="16" height="16" viewBox="0 0 16 16"><path d="M0.6 1.6 L5.2 0.8 L15.4 5.8 L15.4 14.4 L10 15.8 L0.6 7.8 Z" fill="#f6d41e" stroke="#1234c8" stroke-width="1.2" stroke-linejoin="miter"/>
<path d="M1.2 2 L3.2 2.6 L3.2 8.8 L1.2 7.4 Z" fill="#f8e040"/><path d="M3.2 2.6 V8.8 L9.8 14.6" fill="none" stroke="#1234c8" stroke-width="0.9"/>
<path d="M5.6 3.2 L9.8 2.4 L15 5.4 L15 9.6 L10.2 10.6 L5.6 7.6 Z" fill="#96c6f4" stroke="#1234c8" stroke-width="1.1"/>
<path d="M7.5 4.5 L10 4 L13.5 6 L13.5 8.5 L10.5 9 L7.5 7 Z" fill="#6aa8ea"/>
<path d="M10.2 10.6 L15.4 9.2 L15.4 14.4 L10 15.8 Z" fill="#f2c040" stroke="#1234c8" stroke-width="1.1"/>
<path d="M4.6 0.9 L7 1.8" stroke="#2a7a2a" stroke-width="1"/></svg>
<div class="t" style="left:90px;top:827.19px;font-size:12.3px;line-height:12.3px;color:#000000;transform:scaleX(0.925);transform-origin:0 0;">Assembly64</div>
<div class="a" style="left:59px;top:852px;width:10px;height:1px;border-top:1px dotted #6a6a6a"></div>
<div class="a" style="left:54px;top:848px;width:9px;height:9px;border:1px solid #919191;background:linear-gradient(#fff,#e8e8e8)"></div>
<svg style="left:54px;top:848px" width="9" height="9" viewBox="0 0 9 9"><path d="M2 4.5 H7 M4.5 2 V7" stroke="#2c3f78" stroke-width="1.2"/></svg>
<svg style="left:69px;top:843px" width="16" height="16" viewBox="0 0 16 16"><path d="M0.6 1.6 L5.2 0.8 L15.4 5.8 L15.4 14.4 L10 15.8 L0.6 7.8 Z" fill="#f6d41e" stroke="#1234c8" stroke-width="1.2" stroke-linejoin="miter"/>
<path d="M1.2 2 L3.2 2.6 L3.2 8.8 L1.2 7.4 Z" fill="#f8e040"/><path d="M3.2 2.6 V8.8 L9.8 14.6" fill="none" stroke="#1234c8" stroke-width="0.9"/>
<path d="M5.6 3.2 L9.8 2.4 L15 5.4 L15 9.6 L10.2 10.6 L5.6 7.6 Z" fill="#96c6f4" stroke="#1234c8" stroke-width="1.1"/>
<path d="M7.5 4.5 L10 4 L13.5 6 L13.5 8.5 L10.5 9 L7.5 7 Z" fill="#6aa8ea"/>
<path d="M10.2 10.6 L15.4 9.2 L15.4 14.4 L10 15.8 Z" fill="#f2c040" stroke="#1234c8" stroke-width="1.1"/>
<path d="M4.6 0.9 L7 1.8" stroke="#2a7a2a" stroke-width="1"/></svg>
<div class="t" style="left:90px;top:845.19px;font-size:12.3px;line-height:12.3px;color:#000000;transform:scaleX(0.925);transform-origin:0 0;">Assembly80</div>
<div class="a" style="left:59px;top:870px;width:10px;height:1px;border-top:1px dotted #6a6a6a"></div>
<div class="a" style="left:54px;top:866px;width:9px;height:9px;border:1px solid #919191;background:linear-gradient(#fff,#e8e8e8)"></div>
<svg style="left:54px;top:866px" width="9" height="9" viewBox="0 0 9 9"><path d="M2 4.5 H7 M4.5 2 V7" stroke="#2c3f78" stroke-width="1.2"/></svg>
<svg style="left:69px;top:861px" width="16" height="16" viewBox="0 0 16 16"><path d="M0.6 1.6 L5.2 0.8 L15.4 5.8 L15.4 14.4 L10 15.8 L0.6 7.8 Z" fill="#f6d41e" stroke="#1234c8" stroke-width="1.2" stroke-linejoin="miter"/>
<path d="M1.2 2 L3.2 2.6 L3.2 8.8 L1.2 7.4 Z" fill="#f8e040"/><path d="M3.2 2.6 V8.8 L9.8 14.6" fill="none" stroke="#1234c8" stroke-width="0.9"/>
<path d="M5.6 3.2 L9.8 2.4 L15 5.4 L15 9.6 L10.2 10.6 L5.6 7.6 Z" fill="#96c6f4" stroke="#1234c8" stroke-width="1.1"/>
<path d="M7.5 4.5 L10 4 L13.5 6 L13.5 8.5 L10.5 9 L7.5 7 Z" fill="#6aa8ea"/>
<path d="M10.2 10.6 L15.4 9.2 L15.4 14.4 L10 15.8 Z" fill="#f2c040" stroke="#1234c8" stroke-width="1.1"/>
<path d="M4.6 0.9 L7 1.8" stroke="#2a7a2a" stroke-width="1"/></svg>
<div class="t" style="left:90px;top:863.19px;font-size:12.3px;line-height:12.3px;color:#000000;transform:scaleX(0.925);transform-origin:0 0;">Assembly83</div>
<div class="a" style="left:59px;top:888px;width:10px;height:1px;border-top:1px dotted #6a6a6a"></div>
<div class="a" style="left:54px;top:884px;width:9px;height:9px;border:1px solid #919191;background:linear-gradient(#fff,#e8e8e8)"></div>
<svg style="left:54px;top:884px" width="9" height="9" viewBox="0 0 9 9"><path d="M2 4.5 H7 M4.5 2 V7" stroke="#2c3f78" stroke-width="1.2"/></svg>
<svg style="left:69px;top:879px" width="16" height="16" viewBox="0 0 16 16"><path d="M0.6 1.6 L5.2 0.8 L15.4 5.8 L15.4 14.4 L10 15.8 L0.6 7.8 Z" fill="#f6d41e" stroke="#1234c8" stroke-width="1.2" stroke-linejoin="miter"/>
<path d="M1.2 2 L3.2 2.6 L3.2 8.8 L1.2 7.4 Z" fill="#f8e040"/><path d="M3.2 2.6 V8.8 L9.8 14.6" fill="none" stroke="#1234c8" stroke-width="0.9"/>
<path d="M5.6 3.2 L9.8 2.4 L15 5.4 L15 9.6 L10.2 10.6 L5.6 7.6 Z" fill="#96c6f4" stroke="#1234c8" stroke-width="1.1"/>
<path d="M7.5 4.5 L10 4 L13.5 6 L13.5 8.5 L10.5 9 L7.5 7 Z" fill="#6aa8ea"/>
<path d="M10.2 10.6 L15.4 9.2 L15.4 14.4 L10 15.8 Z" fill="#f2c040" stroke="#1234c8" stroke-width="1.1"/>
<path d="M4.6 0.9 L7 1.8" stroke="#2a7a2a" stroke-width="1"/></svg>
<div class="t" style="left:90px;top:881.19px;font-size:12.3px;line-height:12.3px;color:#000000;transform:scaleX(0.925);transform-origin:0 0;">Assembly84</div>
<div class="a" style="left:59px;top:906px;width:10px;height:1px;border-top:1px dotted #6a6a6a"></div>
<div class="a" style="left:54px;top:902px;width:9px;height:9px;border:1px solid #919191;background:linear-gradient(#fff,#e8e8e8)"></div>
<svg style="left:54px;top:902px" width="9" height="9" viewBox="0 0 9 9"><path d="M2 4.5 H7 M4.5 2 V7" stroke="#2c3f78" stroke-width="1.2"/></svg>
<svg style="left:69px;top:897px" width="16" height="16" viewBox="0 0 16 16"><path d="M0.6 1.6 L5.2 0.8 L15.4 5.8 L15.4 14.4 L10 15.8 L0.6 7.8 Z" fill="#f6d41e" stroke="#1234c8" stroke-width="1.2" stroke-linejoin="miter"/>
<path d="M1.2 2 L3.2 2.6 L3.2 8.8 L1.2 7.4 Z" fill="#f8e040"/><path d="M3.2 2.6 V8.8 L9.8 14.6" fill="none" stroke="#1234c8" stroke-width="0.9"/>
<path d="M5.6 3.2 L9.8 2.4 L15 5.4 L15 9.6 L10.2 10.6 L5.6 7.6 Z" fill="#96c6f4" stroke="#1234c8" stroke-width="1.1"/>
<path d="M7.5 4.5 L10 4 L13.5 6 L13.5 8.5 L10.5 9 L7.5 7 Z" fill="#6aa8ea"/>
<path d="M10.2 10.6 L15.4 9.2 L15.4 14.4 L10 15.8 Z" fill="#f2c040" stroke="#1234c8" stroke-width="1.1"/>
<path d="M4.6 0.9 L7 1.8" stroke="#2a7a2a" stroke-width="1"/></svg>
<div class="t" style="left:90px;top:899.19px;font-size:12.3px;line-height:12.3px;color:#000000;transform:scaleX(0.925);transform-origin:0 0;">Assembly86</div>
<div class="a" style="left:59px;top:924px;width:10px;height:1px;border-top:1px dotted #6a6a6a"></div>
<div class="a" style="left:54px;top:920px;width:9px;height:9px;border:1px solid #919191;background:linear-gradient(#fff,#e8e8e8)"></div>
<svg style="left:54px;top:920px" width="9" height="9" viewBox="0 0 9 9"><path d="M2 4.5 H7 M4.5 2 V7" stroke="#2c3f78" stroke-width="1.2"/></svg>
<svg style="left:69px;top:915px" width="16" height="16" viewBox="0 0 16 16"><path d="M0.7 9 L3.5 6.2 L4 6.2 L4 4 L7 1 L12.3 1 L12.3 4.8 L13.6 5.5 L13.6 11 L9.5 14.6 L0.7 14.6 Z" fill="#2f86f2" stroke="#000" stroke-width="1.4" stroke-linejoin="miter"/>
<rect x="4" y="4" width="5" height="4.6" fill="#3d95fa" stroke="#000" stroke-width="1.3"/>
<path d="M0.7 9 H9.5 V14.6 M9 4 L12.3 1 M9.5 9 L13.6 5.5" fill="none" stroke="#000" stroke-width="1.2"/>
<path d="M2 11.5 H8" stroke="#8fd4ff" stroke-width="1.2"/><path d="M5 5.5 L7.5 6.5" stroke="#9fdcff" stroke-width="1"/><path d="M11 7 V11" stroke="#7cc4ff" stroke-width="1"/></svg>
<div class="t" style="left:90px;top:917.19px;font-size:12.3px;line-height:12.3px;color:#000000;transform:scaleX(0.925);transform-origin:0 0;">Part356</div>
<div class="a" style="left:59px;top:942px;width:10px;height:1px;border-top:1px dotted #6a6a6a"></div>
<div class="a" style="left:54px;top:938px;width:9px;height:9px;border:1px solid #919191;background:linear-gradient(#fff,#e8e8e8)"></div>
<svg style="left:54px;top:938px" width="9" height="9" viewBox="0 0 9 9"><path d="M2 4.5 H7 M4.5 2 V7" stroke="#2c3f78" stroke-width="1.2"/></svg>
<svg style="left:69px;top:933px" width="16" height="16" viewBox="0 0 16 16"><path d="M0.7 9 L3.5 6.2 L4 6.2 L4 4 L7 1 L12.3 1 L12.3 4.8 L13.6 5.5 L13.6 11 L9.5 14.6 L0.7 14.6 Z" fill="#2f86f2" stroke="#000" stroke-width="1.4" stroke-linejoin="miter"/>
<rect x="4" y="4" width="5" height="4.6" fill="#3d95fa" stroke="#000" stroke-width="1.3"/>
<path d="M0.7 9 H9.5 V14.6 M9 4 L12.3 1 M9.5 9 L13.6 5.5" fill="none" stroke="#000" stroke-width="1.2"/>
<path d="M2 11.5 H8" stroke="#8fd4ff" stroke-width="1.2"/><path d="M5 5.5 L7.5 6.5" stroke="#9fdcff" stroke-width="1"/><path d="M11 7 V11" stroke="#7cc4ff" stroke-width="1"/></svg>
<div class="t" style="left:90px;top:935.19px;font-size:12.3px;line-height:12.3px;color:#000000;transform:scaleX(0.925);transform-origin:0 0;">Part342</div></div></div>
<div class="a" style="left:302px;top:229px;width:17px;height:714px;background:#f0f0f0;"></div>
<div class="a" style="left:302px;top:247px;width:16px;height:362px;background:#cdcdcd;"></div>
<svg style="left:304px;top:234px" width="12" height="10" viewBox="0 0 12 10"><path d="M2 7 L6 3 L10 7" fill="none" stroke="#606060" stroke-width="1.6"/></svg>
<svg style="left:304px;top:929px" width="12" height="10" viewBox="0 0 12 10"><path d="M2 3 L6 7 L10 3" fill="none" stroke="#606060" stroke-width="1.6"/></svg>
<div class="a" style="left:27px;top:943px;width:292px;height:17px;background:#f0f0f0;"></div>
<div class="a" style="left:45px;top:944px;width:178px;height:15px;background:#cdcdcd;"></div>
<svg style="left:31px;top:946px" width="10" height="12" viewBox="0 0 10 12"><path d="M7 2 L3 6 L7 10" fill="none" stroke="#606060" stroke-width="1.6"/></svg>
<svg style="left:288px;top:946px" width="10" height="12" viewBox="0 0 10 12"><path d="M3 2 L7 6 L3 10" fill="none" stroke="#606060" stroke-width="1.6"/></svg>
<div class="a" style="left:26px;top:960px;width:59px;height:24px;background:#f8f8f8;border:1px solid #a0a0a0;border-top:none"></div>
<div class="t" style="left:48.5px;top:966.85px;font-size:11.4px;line-height:11.4px;color:#333;">Scene</div>
<div class="t" style="left:108.5px;top:966.85px;font-size:11.4px;line-height:11.4px;color:#333;">Properties</div>
<div class="t" style="left:190px;top:966.85px;font-size:11.4px;line-height:11.4px;color:#333;">Search</div>
<svg style="left:33px;top:965px" width="11" height="14" viewBox="0 0 11 14"><path d="M4.5 0.5 V3 M6.5 0.5 V3 M4 3 H7 V6 M4 3 V6 L1.5 9 V13.5 M7 6 L9.5 9 V13.5 M1.5 13.5 H9.5 M5.5 6 V13.5" fill="none" stroke="#7ab0c0" stroke-width="1"/></svg>
<svg style="left:93px;top:964px" width="11" height="17" viewBox="0 0 11 17"><rect x="0.5" y="0.5" width="10" height="15.5" fill="#fff" stroke="#777"/><rect x="1.5" y="1.5" width="6" height="6" fill="#3f7fcf"/><path d="M3 10 V13 M2 12 H8 M6 14 H9" stroke="#444"/></svg>
<svg style="left:172px;top:965px" width="16" height="15" viewBox="0 0 16 15"><circle cx="6" cy="6" r="5" fill="#e4f4f8" stroke="#7a8a90" stroke-width="1.3"/><path d="M9.5 9.5 L14.5 14" stroke="#555" stroke-width="2.2"/></svg>
<div class="t" style="left:25px;top:992.84px;font-size:12px;line-height:12px;color:#333;">Starter</div>
<div class="a" style="left:0px;top:351px;width:25px;height:601px;background:#efefef;"></div>
<div class="a" style="left:6px;top:360px;width:2px;height:2px;background:#9a9a9a;"></div><div class="a" style="left:10px;top:360px;width:2px;height:2px;background:#9a9a9a;"></div><div class="a" style="left:14px;top:360px;width:2px;height:2px;background:#9a9a9a;"></div><div class="a" style="left:18px;top:360px;width:2px;height:2px;background:#9a9a9a;"></div>
<svg style="left:4px;top:370px" width="18" height="16" viewBox="0 0 18 16"><path d="M4.5 4.5 L7.5 1.5 H15.5 V12.5 L12.5 15.5 H4.5 Z M4.5 4.5 H12.5 V15.5 M12.5 4.5 L15.5 1.5" fill="none" stroke="#b0b0b0"/><path d="M1 7 H4" stroke="#b0b0b0"/></svg>
<svg style="left:4px;top:392px" width="18" height="18" viewBox="0 0 18 18"><rect x="5.5" y="1.5" width="11" height="11" fill="none" stroke="#b4b4b4"/><circle cx="6" cy="12" r="4.5" fill="none" stroke="#c0c0c0"/></svg>
<div class="a" style="left:3px;top:415px;width:20px;height:1px;background:#d0d0d0;"></div>
<svg style="left:4px;top:421px" width="18" height="18" viewBox="0 0 18 18"><rect x="5.5" y="1.5" width="11" height="11" fill="none" stroke="#b4b4b4"/><circle cx="6" cy="12" r="4.5" fill="none" stroke="#c0c0c0"/></svg>
<svg style="left:4px;top:443px" width="18" height="18" viewBox="0 0 18 18"><rect x="5.5" y="1.5" width="11" height="11" fill="none" stroke="#b4b4b4"/><circle cx="6" cy="12" r="4.5" fill="none" stroke="#c0c0c0"/></svg>
<svg style="left:4px;top:465px" width="18" height="18" viewBox="0 0 18 18"><rect x="5.5" y="1.5" width="11" height="11" fill="none" stroke="#b4b4b4"/><circle cx="6" cy="12" r="4.5" fill="none" stroke="#c0c0c0"/></svg>
<svg style="left:5px;top:486px" width="6" height="8" viewBox="0 0 6 8"><path d="M5 0 L0 4 L5 8 Z" fill="#777"/></svg>
<div class="a" style="left:6px;top:501px;width:2px;height:2px;background:#9a9a9a;"></div><div class="a" style="left:10px;top:501px;width:2px;height:2px;background:#9a9a9a;"></div><div class="a" style="left:14px;top:501px;width:2px;height:2px;background:#9a9a9a;"></div><div class="a" style="left:18px;top:501px;width:2px;height:2px;background:#9a9a9a;"></div>
<svg style="left:5px;top:511.0px" width="17" height="17" viewBox="0 0 17 17"><path d="M1.5 5.5 L5.5 1.5 H15.5 L11.5 5.5 Z" fill="#fff" stroke="#4a6fa5"/><path d="M11.5 5.5 L15.5 1.5 V11.5 L11.5 15.5 Z" fill="#fff" stroke="#4a6fa5"/><path d="M1.5 5.5 H11.5 V15.5 H1.5 Z" fill="#3f80d0" stroke="#4a6fa5"/></svg>
<svg style="left:5px;top:532.9px" width="17" height="17" viewBox="0 0 17 17"><path d="M1.5 5.5 L5.5 1.5 H15.5 L11.5 5.5 Z" fill="#3f80d0" stroke="#4a6fa5"/><path d="M11.5 5.5 L15.5 1.5 V11.5 L11.5 15.5 Z" fill="#fff" stroke="#4a6fa5"/><path d="M1.5 5.5 H11.5 V15.5 H1.5 Z" fill="#fff" stroke="#4a6fa5"/></svg>
<svg style="left:5px;top:554.8px" width="17" height="17" viewBox="0 0 17 17"><path d="M1.5 5.5 L5.5 1.5 H15.5 L11.5 5.5 Z" fill="#fff" stroke="#4a6fa5"/><path d="M11.5 5.5 L15.5 1.5 V11.5 L11.5 15.5 Z" fill="#fff" stroke="#4a6fa5"/><path d="M1.5 5.5 H11.5 V15.5 H1.5 Z" fill="#fff" stroke="#4a6fa5"/><path d="M1.5 5.5 L4.5 2.5 V12.5 L1.5 15.5 Z" fill="#3f80d0" stroke="#4a6fa5"/></svg>
<svg style="left:5px;top:576.7px" width="17" height="17" viewBox="0 0 17 17"><path d="M1.5 5.5 L5.5 1.5 H15.5 L11.5 5.5 Z" fill="#fff" stroke="#4a6fa5"/><path d="M11.5 5.5 L15.5 1.5 V11.5 L11.5 15.5 Z" fill="#3f80d0" stroke="#4a6fa5"/><path d="M1.5 5.5 H11.5 V15.5 H1.5 Z" fill="#fff" stroke="#4a6fa5"/></svg>
<svg style="left:5px;top:598.6px" width="17" height="17" viewBox="0 0 17 17"><path d="M1.5 5.5 L5.5 1.5 H15.5 L11.5 5.5 Z" fill="#fff" stroke="#4a6fa5"/><path d="M11.5 5.5 L15.5 1.5 V11.5 L11.5 15.5 Z" fill="#fff" stroke="#4a6fa5"/><path d="M1.5 5.5 H11.5 V15.5 H1.5 Z" fill="#fff" stroke="#4a6fa5"/><rect x="5.5" y="2.5" width="9" height="9" fill="#3f80d0"/><path d="M1.5 5.5 H11.5 V15.5 H1.5 Z" fill="none" stroke="#4a6fa5"/></svg>
<svg style="left:5px;top:620.5px" width="17" height="17" viewBox="0 0 17 17"><path d="M1.5 5.5 L5.5 1.5 H15.5 L11.5 5.5 Z" fill="#fff" stroke="#4a6fa5"/><path d="M11.5 5.5 L15.5 1.5 V11.5 L11.5 15.5 Z" fill="#fff" stroke="#4a6fa5"/><path d="M1.5 5.5 H11.5 V15.5 H1.5 Z" fill="#fff" stroke="#4a6fa5"/><path d="M1.5 15.5 L4.5 12.5 H14.5 L11.5 15.5 Z" fill="#3f80d0"/></svg>
<svg style="left:5px;top:642.4px" width="17" height="17" viewBox="0 0 17 17"><path d="M1.5 5.5 L5.5 1.5 H15.5 L11.5 5.5 Z" fill="#3f80d0" stroke="#4a6fa5"/><path d="M11.5 5.5 L15.5 1.5 V11.5 L11.5 15.5 Z" fill="#3f80d0" stroke="#4a6fa5"/><path d="M1.5 5.5 H11.5 V15.5 H1.5 Z" fill="#3f80d0" stroke="#4a6fa5"/></svg>
<svg style="left:5px;top:664.3px" width="17" height="17" viewBox="0 0 17 17"><path d="M1.5 5.5 L5.5 1.5 H15.5 L11.5 5.5 Z" fill="#fff" stroke="#4a6fa5"/><path d="M11.5 5.5 L15.5 1.5 V11.5 L11.5 15.5 Z" fill="#3f80d0" stroke="#4a6fa5"/><path d="M1.5 5.5 H11.5 V15.5 H1.5 Z" fill="#3f80d0" stroke="#4a6fa5"/><path d="M1.5 5.5 L5.5 1.5 H8 L1.5 8 Z" fill="#fff" stroke="#4a6fa5"/></svg>
<svg style="left:5px;top:686.2px" width="17" height="17" viewBox="0 0 17 17"><path d="M1.5 5.5 L5.5 1.5 H15.5 L11.5 5.5 Z" fill="#3f80d0" stroke="#4a6fa5"/><path d="M11.5 5.5 L15.5 1.5 V11.5 L11.5 15.5 Z" fill="#3f80d0" stroke="#4a6fa5"/><path d="M1.5 5.5 H11.5 V15.5 H1.5 Z" fill="#3f80d0" stroke="#4a6fa5"/></svg>
<svg style="left:5px;top:708.1px" width="17" height="17" viewBox="0 0 17 17"><path d="M1.5 5.5 L5.5 1.5 H15.5 L11.5 5.5 Z" fill="#fff" stroke="#4a6fa5"/><path d="M11.5 5.5 L15.5 1.5 V11.5 L11.5 15.5 Z" fill="#fff" stroke="#4a6fa5"/><path d="M1.5 5.5 H11.5 V15.5 H1.5 Z" fill="#3f80d0" stroke="#4a6fa5"/><path d="M1.5 5.5 L5.5 1.5 V8 L1.5 12 Z" fill="#fff" stroke="#4a6fa5"/></svg>
<svg style="left:5px;top:727px" width="6" height="8" viewBox="0 0 6 8"><path d="M5 0 L0 4 L5 8 Z" fill="#777"/></svg>
<div class="a" style="left:6px;top:744px;width:2px;height:2px;background:#9a9a9a;"></div><div class="a" style="left:10px;top:744px;width:2px;height:2px;background:#9a9a9a;"></div><div class="a" style="left:14px;top:744px;width:2px;height:2px;background:#9a9a9a;"></div><div class="a" style="left:18px;top:744px;width:2px;height:2px;background:#9a9a9a;"></div>
<svg style="left:4px;top:750px" width="18" height="16" viewBox="0 0 18 16"><path d="M3 3 L15 13" stroke="#222" stroke-width="1.3"/><path d="M1 5 L5 1 M13 15 L17 11" stroke="#444"/><circle cx="3.5" cy="3.5" r="1.3" fill="#222"/><circle cx="14.5" cy="12.5" r="1.3" fill="#222"/></svg>
<svg style="left:4px;top:775px" width="18" height="16" viewBox="0 0 18 16"><path d="M1.5 1 V7 M16.5 1 V7 M1.5 4 H16.5" stroke="#e03030" stroke-width="1.3"/><ellipse cx="9.5" cy="11.5" rx="4" ry="2.5" fill="#2a7fd8"/></svg>
<svg style="left:4px;top:797px" width="18" height="17" viewBox="0 0 18 17"><path d="M1 1 H7 M1 16 H7 M4 1 V16" stroke="#e03030" stroke-width="1.3"/><ellipse cx="13" cy="8.5" rx="4" ry="3" fill="#2a7fd8"/></svg>
<svg style="left:4px;top:819px" width="18" height="17" viewBox="0 0 18 17"><path d="M1.5 15.5 H16.5 L12 5 L1.5 15.5" fill="none" stroke="#333" stroke-width="1.2"/></svg>
<svg style="left:4px;top:841px" width="18" height="18" viewBox="0 0 18 18"><circle cx="9" cy="9" r="7.5" fill="#fff" stroke="#555" stroke-width="1.1"/><path d="M5 5 L9 9" stroke="#333" stroke-width="1.2"/></svg>
<svg style="left:4px;top:862px" width="18" height="18" viewBox="0 0 18 18"><circle cx="9" cy="9" r="7.5" fill="#fff" stroke="#555" stroke-width="1.1"/><path d="M4 4 L14 14" stroke="#333" stroke-width="1.2"/></svg>
<div class="a" style="left:3px;top:887px;width:20px;height:1px;background:#d0d0d0;"></div>
<svg style="left:4px;top:892px" width="18" height="18" viewBox="0 0 18 18"><path d="M2 15 Q4 8 8 8 L10 8" fill="none" stroke="#333" stroke-width="1.1"/><text x="11" y="11" font-size="10" font-weight="bold" font-family="Liberation Sans" fill="#111">A</text></svg>
<div class="a" style="left:9px;top:914px;width:9px;height:19px;background:#b5b5b5;border:1px solid #999"></div>
<svg style="left:5px;top:940px" width="6" height="8" viewBox="0 0 6 8"><path d="M5 0 L0 4 L5 8 Z" fill="#777"/></svg>
<div class="a" style="left:326px;top:183px;width:1594px;height:802px;overflow:hidden"><div class="a" style="left:-326px;top:-183px;width:1920px;height:1041px"><svg style="left:0;top:0" width="1920" height="1041" viewBox="0 0 1920 1041"><defs><linearGradient id="cyl" x1="0" x2="1" y1="0" y2="0"><stop offset="0" stop-color="#5a6b7b"/><stop offset="0.45" stop-color="#7a8a99"/><stop offset="1" stop-color="#5b6a78"/></linearGradient><linearGradient id="tire" x1="0" x2="1"><stop offset="0" stop-color="#111"/><stop offset="1" stop-color="#2a2a2a"/></linearGradient></defs>
<path d="M891 308 Q893 288 912 276 L947 275 Q970 288 975 306 L983 470 L1000 560 L914 545 Z" fill="url(#cyl)" stroke="#1c232b" stroke-width="1"/>
<ellipse cx="929" cy="272" rx="18" ry="7" fill="#6f7f8e" stroke="#2a323a" stroke-width="1"/>
<ellipse cx="929" cy="268" rx="13" ry="4.5" fill="#7d8c9a" stroke="#2a323a" stroke-width="0.8"/>
<path d="M892 307 Q932 330 973 305" fill="none" stroke="#2a323a" stroke-width="1"/>
<path d="M893 322 Q933 345 975 320" fill="none" stroke="#2a323a" stroke-width="1"/>
<path d="M906 284 Q930 296 958 282" fill="none" stroke="#2a323a" stroke-width="0.8"/>
<path d="M686.3 385.5 L713.8 377.0 L717.0 379.1 L767.7 362.2 L768.8 358.0 L794.2 349.5 L795.2 351.6 L789.9 354.8" fill="none" stroke="#d9d7d2" stroke-width="1.5" stroke-linejoin="round" stroke-linecap="round" />
<path d="M789.9 354.8 L828.0 375.9 L855.5 391.8 L899.9 403.4" fill="none" stroke="#d9d7d2" stroke-width="1.5" stroke-linejoin="round" stroke-linecap="round" />
<path d="M686.3 385.5 L701.1 390.7 L736.0 405.5 L747.7 408.7 L754.0 411.9" fill="none" stroke="#d9d7d2" stroke-width="1.5" stroke-linejoin="round" stroke-linecap="round" />
<path d="M699.0 408.7 L725.5 400.3 L728.6 402.4 L780.4 380.2 L781.5 375.9 L806.8 371.7 L807.9 373.8 L801.6 377.6" fill="none" stroke="#d9d7d2" stroke-width="1.5" stroke-linejoin="round" stroke-linecap="round" />
<path d="M801.6 377.6 L840.7 399.2 L866.0 414.0 L902.0 424.1" fill="none" stroke="#d9d7d2" stroke-width="1.5" stroke-linejoin="round" stroke-linecap="round" />
<path d="M699.0 408.7 L749.8 430.9 L783.6 447.8 L797.3 469.0 L853.4 488.0 L902.0 500.7" fill="none" stroke="#d9d7d2" stroke-width="1.5" stroke-linejoin="round" stroke-linecap="round" />
<path d="M797.3 469.0 L851.2 504.9 L902.0 518.6 L912.6 521.8" fill="none" stroke="#d9d7d2" stroke-width="1.5" stroke-linejoin="round" stroke-linecap="round" />
<path d="M815.3 382.3 L828.0 375.9" fill="none" stroke="#d9d7d2" stroke-width="1.5" stroke-linejoin="round" stroke-linecap="round" />
<path d="M760.3 384.4 L779.4 379.1" fill="none" stroke="#d9d7d2" stroke-width="1.5" stroke-linejoin="round" stroke-linecap="round" />
<path d="M743.4 409.8 L754.0 405.5" fill="none" stroke="#d9d7d2" stroke-width="1.5" stroke-linejoin="round" stroke-linecap="round" />
<path d="M832.2 403.4 L847.0 397.1" fill="none" stroke="#d9d7d2" stroke-width="1.5" stroke-linejoin="round" stroke-linecap="round" />
<path d="M849.1 418.2 L866.0 412.9" fill="none" stroke="#d9d7d2" stroke-width="1.5" stroke-linejoin="round" stroke-linecap="round" />
<path d="M756.1 430.9 L768.8 425.6" fill="none" stroke="#d9d7d2" stroke-width="1.5" stroke-linejoin="round" stroke-linecap="round" />
<path d="M783.6 447.8 L794.2 443.6" fill="none" stroke="#d9d7d2" stroke-width="1.5" stroke-linejoin="round" stroke-linecap="round" />
<path d="M798.4 469.0 L813.2 463.7" fill="none" stroke="#d9d7d2" stroke-width="1.5" stroke-linejoin="round" stroke-linecap="round" />
<path d="M853.4 488.0 L870.3 483.8" fill="none" stroke="#d9d7d2" stroke-width="1.5" stroke-linejoin="round" stroke-linecap="round" />
<path d="M855.5 504.9 L872.4 499.6" fill="none" stroke="#d9d7d2" stroke-width="1.5" stroke-linejoin="round" stroke-linecap="round" />
<ellipse cx="799.5" cy="400.3" rx="45.5" ry="20.1" fill="none" stroke="#d9d7d2" stroke-width="1.5" transform="rotate(-3 799.5 400.3)"/>
<ellipse cx="814.2" cy="424.6" rx="46.5" ry="22.2" fill="none" stroke="#d9d7d2" stroke-width="1.5" transform="rotate(-3 814.2 424.6)"/>
<path d="M798.4 437.3 L902.0 390.7" fill="none" stroke="#d9d7d2" stroke-width="1.5" stroke-linejoin="round" stroke-linecap="round" stroke-dasharray="16 5 3 5"/>
<path d="M804.7 462.6 L902.0 427.7" fill="none" stroke="#d9d7d2" stroke-width="1.5" stroke-linejoin="round" stroke-linecap="round" stroke-dasharray="16 5 3 5"/>
<path d="M815.3 458.4 L902.0 426.7" fill="none" stroke="#d9d7d2" stroke-width="1.5" stroke-linejoin="round" stroke-linecap="round" stroke-dasharray="16 5 3 5"/>
<path d="M853.4 485.9 L940.0 449.9" fill="none" stroke="#d9d7d2" stroke-width="1.5" stroke-linejoin="round" stroke-linecap="round" stroke-dasharray="16 5 3 5"/>
<path d="M855.5 502.8 L940.0 469.0" fill="none" stroke="#d9d7d2" stroke-width="1.5" stroke-linejoin="round" stroke-linecap="round" stroke-dasharray="16 5 3 5"/>
<path d="M828.0 433.0 L891.4 409.8" fill="none" stroke="#d9d7d2" stroke-width="1.5" stroke-linejoin="round" stroke-linecap="round" stroke-dasharray="16 5 3 5"/>
<circle cx="836.4" cy="388.6" r="1.6" fill="#d9d7d2"/>
<circle cx="849.1" cy="411.9" r="1.6" fill="#d9d7d2"/>
<circle cx="764.6" cy="415.1" r="1.6" fill="#d9d7d2"/>
<circle cx="777.3" cy="439.4" r="1.6" fill="#d9d7d2"/>
<path d="M895.0 573.0 L898.0 600.0 L912.0 625.0 L926.0 665.0" fill="none" stroke="#d9d7d2" stroke-width="1.4" stroke-linejoin="round" stroke-linecap="round" />
<path d="M897.0 573.0 L915.0 560.0 L940.0 555.0" fill="none" stroke="#d9d7d2" stroke-width="1.4" stroke-linejoin="round" stroke-linecap="round" />
<path d="M905.0 700.0 L930.0 690.0 L972.0 766.0 L996.0 750.0 L1060.0 790.0 L1064.0 840.0 L1030.0 830.0 L968.0 778.0 Z" fill="#262626" />
<path d="M976.0 770.0 L996.0 750.0 L1059.0 790.0 L1063.0 838.0 L1040.0 832.0 Z" fill="#2c2c2c" />
<path d="M889.0 706.0 L918.0 695.0" fill="none" stroke="#111" stroke-width="7" stroke-linejoin="round" stroke-linecap="round" />
<path d="M891.0 705.0 L934.0 688.0" fill="none" stroke="#111" stroke-width="6" stroke-linejoin="round" stroke-linecap="round" />
<path d="M913.0 538.0 L990.0 512.0 L1000.0 546.0 L951.0 567.0 Z" fill="#eeeef0" stroke="#555" stroke-width="0.8"/>
<path d="M951.0 567.0 L998.0 547.0 L1000.0 590.0 L958.0 600.0 Z" fill="#e6e6e8" stroke="#666" stroke-width="0.6"/>
<path d="M913.0 540.0 L926.0 549.0 L945.0 744.0 L931.0 684.0 Z" fill="#b9c2cf" />
<path d="M926.0 549.0 L951.0 567.0 L972.0 766.0 L945.0 744.0 Z" fill="#f0f0f2" stroke="#444" stroke-width="0.8"/>
<rect x="966" y="460" width="22" height="80" fill="#8d9aab" fill-opacity="0.55" stroke="#1a1a1a" stroke-width="1.2"/>
<rect x="971.0" y="482" width="12" height="58" fill="#161616"/>
<ellipse cx="977.0" cy="460" rx="11.0" ry="5" fill="#a8b4c0" stroke="#1a1a1a" stroke-width="1"/>
<ellipse cx="977.0" cy="500" rx="11.0" ry="5" fill="none" stroke="#333" stroke-width="1"/>
<rect x="937" y="473" width="27" height="80" fill="#8d9aab" fill-opacity="0.55" stroke="#1a1a1a" stroke-width="1.2"/>
<rect x="944.5" y="495" width="12" height="58" fill="#161616"/>
<ellipse cx="950.5" cy="473" rx="13.5" ry="5" fill="#a8b4c0" stroke="#1a1a1a" stroke-width="1"/>
<ellipse cx="950.5" cy="513" rx="13.5" ry="5" fill="none" stroke="#333" stroke-width="1"/>
<path d="M971.0 441.0 L979.0 419.0 L1024.0 399.0 L1037.0 410.0 L1098.0 427.0 L1143.0 415.0 L1170.0 435.0 L1187.0 483.0 L1181.0 523.0 L1190.0 531.0 L1192.0 596.0 L1119.0 602.0 L1006.0 571.0 L999.0 567.0 Z" fill="#262626" />
<path d="M979.0 419.0 L1024.0 399.0 L1037.0 410.0 L1033.0 423.0 L982.0 444.0 L971.0 441.0 Z" fill="#353535" />
<path d="M1010.0 412.0 L1114.0 427.0" fill="none" stroke="#0c0c0c" stroke-width="7" stroke-linejoin="round" stroke-linecap="round" />
<path d="M1098.0 435.0 L1140.0 417.0 L1150.0 418.0 L1166.0 438.0 L1112.0 461.0 Z" fill="#3a3a3a" />
<path d="M1106.0 463.0 L1170.0 440.0" fill="none" stroke="#0e0e0e" stroke-width="3" stroke-linejoin="round" stroke-linecap="round" />
<path d="M1112 467 L1169 446 Q1182 470 1179 495 L1122 523 Q1122 490 1112 467 Z" fill="#4a4c50"/>
<path d="M1100 464 Q1118 490 1121 522" fill="none" stroke="#0e0e0e" stroke-width="4"/>
<path d="M1167 438 Q1186 455 1186 490 L1179 500" fill="none" stroke="#111" stroke-width="3"/>
<path d="M1116.0 529.0 L1181.0 505.0 L1187.0 537.0 L1120.0 561.0 Z" fill="#333" />
<path d="M1118.0 563.0 L1189.0 534.0" fill="none" stroke="#0a0a0a" stroke-width="5" stroke-linejoin="round" stroke-linecap="round" />
<path d="M1120.0 566.0 L1191.0 539.0 L1193.0 566.0 L1128.0 602.0 Z" fill="#3a3a3a" />
<path d="M982.0 444.0 L1033.0 423.0 L1098.0 434.0 L1093.0 465.0 Z" fill="#1ec81e" />
<path d="M982.0 445.0 L1093.0 466.0 L1117.0 601.0 L1008.0 568.0 Z" fill="#08b108" stroke="#111" stroke-width="1"/>
<path d="M1095.0 466.0 L1118.0 600.0" fill="none" stroke="#101010" stroke-width="8" stroke-linejoin="round" stroke-linecap="round" />
<path d="M976.0 444.0 L1003.0 570.0" fill="none" stroke="#101010" stroke-width="9" stroke-linejoin="round" stroke-linecap="round" />
<path d="M985.0 520.0 L1050.0 492.0" fill="none" stroke="#d9d7d2" stroke-width="1.4" stroke-linejoin="round" stroke-linecap="round" stroke-dasharray="16 5 3 5"/>
<path d="M990.0 545.0 L1060.0 515.0" fill="none" stroke="#d9d7d2" stroke-width="1.4" stroke-linejoin="round" stroke-linecap="round" stroke-dasharray="16 5 3 5"/>
<path d="M1000.0 565.0 L1065.0 537.0" fill="none" stroke="#d9d7d2" stroke-width="1.4" stroke-linejoin="round" stroke-linecap="round" stroke-dasharray="16 5 3 5"/>
<path d="M985.0 495.0 L1035.0 470.0" fill="none" stroke="#d9d7d2" stroke-width="1.4" stroke-linejoin="round" stroke-linecap="round" stroke-dasharray="16 5 3 5"/>
<path d="M1020.0 510.0 L1040.0 500.0 L1041.0 528.0 L1022.0 538.0" fill="none" stroke="#d9d7d2" stroke-width="1.2" stroke-linejoin="round" stroke-linecap="round" />
<rect x="-9" y="-3" width="18" height="6" rx="3" fill="#f6f6f6" stroke="#111" stroke-width="1.2" transform="translate(953.0 681) rotate(35)"/>
<rect x="-9" y="-3" width="18" height="6" rx="3" fill="#f6f6f6" stroke="#111" stroke-width="1.2" transform="translate(953.9 692) rotate(35)"/>
<rect x="-9" y="-3" width="18" height="6" rx="3" fill="#f6f6f6" stroke="#111" stroke-width="1.2" transform="translate(954.8 703) rotate(35)"/>
<rect x="-9" y="-3" width="18" height="6" rx="3" fill="#f6f6f6" stroke="#111" stroke-width="1.2" transform="translate(955.7 714) rotate(35)"/>
<rect x="-9" y="-3" width="18" height="6" rx="3" fill="#f6f6f6" stroke="#111" stroke-width="1.2" transform="translate(956.6 725) rotate(35)"/>
<rect x="-9" y="-3" width="18" height="6" rx="3" fill="#f6f6f6" stroke="#111" stroke-width="1.2" transform="translate(957.5 736) rotate(35)"/>
<rect x="-9" y="-3" width="18" height="6" rx="3" fill="#f6f6f6" stroke="#111" stroke-width="1.2" transform="translate(958.4 747) rotate(35)"/>
<path d="M995.0 688.0 L1048.0 715.0 L1063.0 730.0 L1066.0 763.0 L1057.0 790.0 L1000.0 751.0 Z" fill="#08b108" />
<path d="M976.0 675.0 L996.0 688.0 L1000.0 751.0 L980.0 770.0 Z" fill="#e8e8ea" />
<ellipse cx="984" cy="683" rx="4" ry="3.5" fill="#4a5a6a"/><ellipse cx="986" cy="702" rx="4" ry="6" fill="#6a7a8a" stroke="#222" stroke-width="0.8"/>
<path d="M998.0 722.0 L982.0 768.0" fill="none" stroke="#111" stroke-width="4" stroke-linejoin="round" stroke-linecap="round" />
<path d="M962.0 576.0 L1125.0 610.0 L1180.0 584.0 L1180.0 600.0 L1070.0 626.0 L962.0 600.0 Z" fill="#dcdce0" />
<path d="M962.0 583.0 L1060.0 606.0 L1062.0 706.0 L1063.0 730.0 L1048.0 715.0 L997.0 690.0 L972.0 662.0 Z" fill="#e4e4e6" />
<path d="M976.0 609.0 L1047.0 654.0 L1047.0 680.0 L978.0 635.0 Z" fill="#4a2222" />
<text x="0" y="0" font-family="Liberation Sans" font-weight="bold" font-size="30" fill="#e01010" stroke="#2a0a0a" stroke-width="1.2" transform="matrix(0.44 0.28 0 1 979 632)" textLength="155" lengthAdjust="spacingAndGlyphs">WELD ROD</text>
<path d="M959 600 Q958 578 980 577 L1062 596" fill="none" stroke="#0c0c0c" stroke-width="8"/>
<path d="M960.0 598.0 L972.0 770.0" fill="none" stroke="#0c0c0c" stroke-width="11" stroke-linejoin="round" stroke-linecap="round" />
<path d="M971 659 Q985 684 998 690 L1047 713 Q1063 728 1066 755 L1067 790" fill="none" stroke="#0c0c0c" stroke-width="8"/>
<path d="M1066.0 606.0 L1068.0 840.0" fill="none" stroke="#0c0c0c" stroke-width="12" stroke-linejoin="round" stroke-linecap="round" />
<path d="M1172.0 588.0 L1174.0 740.0" fill="none" stroke="#0c0c0c" stroke-width="9" stroke-linejoin="round" stroke-linecap="round" />
<path d="M940.0 748.0 L978.0 771.0 L1055.0 828.0 L1100.0 838.0" fill="none" stroke="#0c0c0c" stroke-width="9" stroke-linejoin="round" stroke-linecap="round" />
<path d="M1070.0 621.0 L1179.0 587.0 L1179.0 671.0 L1078.0 723.0 Z" fill="#e9e9ed" stroke="#666" stroke-width="0.8"/>
<path d="M1071.0 672.0 L1178.0 628.0" fill="none" stroke="#888" stroke-width="1" stroke-linejoin="round" stroke-linecap="round" />
<path d="M1076.0 636.0 L1080.0 700.0" fill="none" stroke="#999" stroke-width="1" stroke-linejoin="round" stroke-linecap="round" />
<path d="M1103 640 Q1101 648 1109 647 L1137 636" fill="none" stroke="#0c0c0c" stroke-width="4" stroke-linecap="round"/>
<path d="M1106 683 Q1104 691 1112 690 L1147 672 Q1152 667 1147 662" fill="none" stroke="#0c0c0c" stroke-width="4" stroke-linecap="round"/>
<path d="M1074.0 727.0 L1172.0 690.0" fill="none" stroke="#0c0c0c" stroke-width="8" stroke-linejoin="round" stroke-linecap="round" />
<path d="M1070.0 620.0 L1178.0 583.0" fill="none" stroke="#111" stroke-width="4" stroke-linejoin="round" stroke-linecap="round" />
<path d="M1076.0 733.0 L1157.0 694.0 L1164.0 702.0 L1097.0 740.0 Z" fill="#30e030" stroke="#0a3a0a" stroke-width="0.6"/>
<path d="M1076.0 733.0 L1097.0 740.0 L1100.0 823.0 L1079.0 812.0 Z" fill="#10c010" />
<path d="M1097.0 740.0 L1164.0 702.0 L1164.0 786.0 L1100.0 823.0 Z" fill="#00b400" stroke="#0a3a0a" stroke-width="0.8"/>
<path d="M1101.0 823.0 L1164.0 785.0 L1178.0 788.0 L1107.0 832.0 Z" fill="#2c2c2c" />
<path d="M968.0 572.0 L1123.0 608.0" fill="none" stroke="#0c0c0c" stroke-width="10" stroke-linejoin="round" stroke-linecap="round" />
<path d="M1117.0 608.0 L1222.0 557.0" fill="none" stroke="#0c0c0c" stroke-width="6" stroke-linejoin="round" stroke-linecap="round" />
<path d="M1122 612 L1169 640 Q1183 648 1198 646 L1222 636 L1292 596 Q1310 582 1292 571 L1222 558 L1196 548" fill="none" stroke="#0a0a0a" stroke-width="8" stroke-linejoin="round"/>
<ellipse cx="870" cy="729" rx="24" ry="40" fill="#1a1a1a" transform="rotate(-12 870 729)"/>
<path d="M838.0 695.0 L866.0 688.0 L876.0 770.0 L846.0 773.0 Z" fill="#161616" />
<ellipse cx="842" cy="734" rx="23" ry="39.5" fill="#0c0c0c" transform="rotate(-12 842 734)" stroke="#3a3a3a" stroke-width="1"/>
<ellipse cx="840" cy="738" rx="13" ry="22" fill="#e6ecf2" transform="rotate(-12 840 738)"/>
<ellipse cx="843" cy="741" rx="7" ry="15" fill="#c4ccd8" transform="rotate(-12 843 741)"/>
<path d="M1036.0 762.0 L1068.0 768.0 L1104.0 836.0 L1111.0 884.0" fill="none" stroke="#141414" stroke-width="9" stroke-linejoin="round" stroke-linecap="round" />
<path d="M1058.0 790.0 L1080.0 830.0 L1086.0 884.0" fill="none" stroke="#1c1c1c" stroke-width="7" stroke-linejoin="round" stroke-linecap="round" />
<path d="M1080.0 826.0 L1108.0 820.0 L1112.0 845.0 L1084.0 850.0 Z" fill="#262626" />
<path d="M1084.0 870.0 L1112.0 866.0 L1113.0 890.0 L1086.0 893.0 Z" fill="#1a1a1a" />
<ellipse cx="1096" cy="898" rx="12" ry="13" fill="#0d0d0d" stroke="#3a3a3a" stroke-width="1"/>
<ellipse cx="1098" cy="898" rx="4" ry="6" fill="#d8d8d8"/>
<path d="M1164.0 721.0 L1200.0 731.0 L1224.0 752.0 L1243.0 790.0" fill="none" stroke="#141414" stroke-width="10" stroke-linejoin="round" stroke-linecap="round" />
<path d="M1164.0 768.0 L1212.0 779.0 L1232.0 800.0" fill="none" stroke="#161616" stroke-width="8" stroke-linejoin="round" stroke-linecap="round" />
<path d="M1180.0 738.0 L1184.0 770.0" fill="none" stroke="#1a1a1a" stroke-width="5" stroke-linejoin="round" stroke-linecap="round" />
<path d="M1222.0 780.0 L1246.0 788.0 L1246.0 806.0 L1224.0 806.0 Z" fill="#161616" />
<ellipse cx="1231" cy="810" rx="12" ry="11" fill="#0d0d0d" stroke="#3a3a3a" stroke-width="1"/>
<ellipse cx="1233" cy="810" rx="4" ry="5" fill="#d8d8d8"/>
<path d="M1025.0 771.0 L1041.0 769.0" fill="none" stroke="#dd1010" stroke-width="2.8" stroke-linejoin="round" stroke-linecap="round" />
<path d="M1025.0 775.0 L1041.0 773.0" fill="none" stroke="#dd1010" stroke-width="2.8" stroke-linejoin="round" stroke-linecap="round" />
<path d="M1025.0 779.0 L1041.0 777.0" fill="none" stroke="#dd1010" stroke-width="2.8" stroke-linejoin="round" stroke-linecap="round" />
<path d="M1025.0 783.0 L1041.0 781.0" fill="none" stroke="#dd1010" stroke-width="2.8" stroke-linejoin="round" stroke-linecap="round" />
<path d="M1025.0 787.0 L1041.0 785.0" fill="none" stroke="#dd1010" stroke-width="2.8" stroke-linejoin="round" stroke-linecap="round" />
<path d="M1025.0 791.0 L1041.0 789.0" fill="none" stroke="#dd1010" stroke-width="2.8" stroke-linejoin="round" stroke-linecap="round" />
<path d="M1025.0 795.0 L1041.0 793.0" fill="none" stroke="#dd1010" stroke-width="2.8" stroke-linejoin="round" stroke-linecap="round" />
<path d="M1028.0 797.0 L1030.0 803.0" fill="none" stroke="#eee" stroke-width="3" stroke-linejoin="round" stroke-linecap="round" />
<path d="M1082.0 800.0 L1083.0 822.0" fill="none" stroke="#dd1010" stroke-width="3.5" stroke-linejoin="round" stroke-linecap="round" />
<circle cx="1082" cy="800" r="3.5" fill="#dd1010"/>
<path d="M1196.0 730.0 L1197.0 775.0" fill="none" stroke="#dd1010" stroke-width="3" stroke-linejoin="round" stroke-linecap="round" />
<circle cx="1196" cy="730" r="4" fill="#dd1010"/></svg></div></div>
<svg style="left:0;top:0" width="1920" height="1041"><path d="M360.5 941 L362.5 932 L365 941 Z" fill="#5a5ad8"/><path d="M362.7 940 V948" stroke="#8a8af0" stroke-width="3"/><path d="M365 947 L372 943 L378 941 L374 946 Z" fill="#109010"/><path d="M365 947 L372 944" stroke="#60e060" stroke-width="1.5"/><path d="M364 949 L371 952 L377 957 L370 956.5 Z" fill="#f08080"/><circle cx="363" cy="949" r="2" fill="#f8d8d8"/><text x="360" y="927.5" font-size="8" font-weight="bold" font-family="Liberation Sans" fill="#1010f0">Z</text><text x="381" y="940" font-size="8" font-family="Liberation Sans" fill="#10e010">Y</text><text x="380.5" y="961" font-size="8.5" font-family="Liberation Sans" fill="#f01010">X</text></svg>
<svg style="left:8px;top:989px" width="14" height="17" viewBox="0 0 14 17"><rect x="0.5" y="2.5" width="11" height="14" fill="#fff" stroke="#555"/><path d="M11.5 0.5 V3" stroke="#555"/><rect x="3" y="6" width="2" height="2" fill="#888"/><rect x="7" y="6" width="2" height="2" fill="#888"/><rect x="3" y="11" width="2" height="2" fill="#888"/><rect x="7" y="11" width="2" height="2" fill="#888"/></svg>
<div class="t" style="left:25px;top:992.01px;font-size:11.8px;line-height:11.8px;color:#444;">Starter</div>
<div class="a" style="left:7px;top:1010px;width:52px;height:6px;background:#d6d6d6;"></div>
<div class="t" style="left:3px;top:1022.33px;font-size:12.6px;line-height:12.6px;color:#0b5fc4;"><u>http://www.ironcad.com</u></div>
<div class="a" style="left:0px;top:1040px;width:48px;height:1px;background:#222;"></div>
<div class="a" style="left:392px;top:1040px;width:1528px;height:1px;background:#222;"></div>
<div class="t" style="left:1130px;top:1022.93px;font-size:11.3px;line-height:11.3px;color:#444;">View size: 1596 x&nbsp;&nbsp;804</div>
<svg style="left:1264px;top:1019px" width="13" height="20" viewBox="0 0 13 20"><rect x="6.5" y="0.5" width="5" height="19" fill="#f2c84a" stroke="#c89a20"/><rect x="0.5" y="4.5" width="4" height="4" fill="#f2c84a" stroke="#c89a20"/><path d="M9 3 H11 M9 6 H11 M9 9 H11 M9 12 H11 M9 15 H11" stroke="#a07010"/></svg>
<div class="t" style="left:1281px;top:1022.84px;font-size:12px;line-height:12px;color:#222;"><b>Units:</b></div>
<div class="t" style="left:1324px;top:1022.84px;font-size:12px;line-height:12px;color:#444;">in, deg</div>
<svg style="left:1386px;top:1020px" width="16" height="16" viewBox="0 0 16 16"><circle cx="6.5" cy="6.5" r="5.5" fill="#eef4fa" stroke="#6a6a6a" stroke-width="1.3"/><path d="M10.5 10.5 L15 15" stroke="#555" stroke-width="2.2"/><rect x="4" y="4" width="5" height="5" fill="none" stroke="#777"/></svg>
<svg style="left:1409px;top:1020px" width="16" height="16" viewBox="0 0 16 16"><circle cx="6.5" cy="6.5" r="5.5" fill="#eef4fa" stroke="#6a6a6a" stroke-width="1.3"/><path d="M10.5 10.5 L15 15" stroke="#555" stroke-width="2.2"/><rect x="3.5" y="3.5" width="6" height="6" fill="none" stroke="#777"/></svg>
<svg style="left:1432px;top:1026px" width="7" height="4" viewBox="0 0 7 4"><path d="M0 0 H7 L3.5 4 Z" fill="#444"/></svg>
<svg style="left:1445px;top:1020px" width="17" height="16" viewBox="0 0 17 16"><path d="M0.5 5.5 L4.5 1.5 H13.5 V10.5 L9.5 14.5 H0.5 Z" fill="#f5d020" stroke="#8a6a10"/><path d="M0.5 5.5 H9.5 V14.5 M9.5 5.5 L13.5 1.5" stroke="#8a6a10" fill="none"/><path d="M13 8 H16" stroke="#d02020" stroke-width="1.5"/></svg>
<svg style="left:1467px;top:1026px" width="7" height="4" viewBox="0 0 7 4"><path d="M0 0 H7 L3.5 4 Z" fill="#444"/></svg>
<svg style="left:1479px;top:1020px" width="17" height="17" viewBox="0 0 17 17"><path d="M0.5 4.5 L4.5 0.5 H15.5 V12.5 L11.5 16.5 H0.5 Z" fill="#3f83d8" stroke="#1e4e90"/><path d="M0.5 4.5 H11.5 V16.5 M11.5 4.5 L15.5 0.5" stroke="#8ec0f0" fill="none"/></svg>
<svg style="left:1502px;top:1026px" width="7" height="4" viewBox="0 0 7 4"><path d="M0 0 H7 L3.5 4 Z" fill="#444"/></svg>
<svg style="left:1514px;top:1021px" width="18" height="17" viewBox="0 0 18 17"><circle cx="6" cy="4" r="2.5" fill="#3f83d8"/><rect x="5" y="7" width="9" height="8" fill="#3f83d8" stroke="#222"/><path d="M0 8 H4" stroke="#222" stroke-dasharray="1 1"/></svg>
<svg style="left:1537px;top:1026px" width="7" height="4" viewBox="0 0 7 4"><path d="M0 0 H7 L3.5 4 Z" fill="#444"/></svg>
<div class="a" style="left:1546px;top:1019px;width:25px;height:21px;background:#cbcbcb;"></div>
<svg style="left:1550px;top:1021px" width="18" height="17" viewBox="0 0 18 17"><path d="M1 7 L7 1 H17 V10 L11 16 H1 Z" fill="#7aa8dc" stroke="#3a5f90"/><path d="M1 7 H11 V16 M11 7 L17 1" stroke="#3a5f90" fill="none"/></svg>
<svg style="left:1573px;top:1022px" width="18" height="15" viewBox="0 0 18 15"><circle cx="4" cy="10" r="3.5" fill="none" stroke="#8aa0a8" stroke-width="1.2"/><circle cx="12" cy="10" r="3.5" fill="none" stroke="#8aa0a8" stroke-width="1.2"/><path d="M7.5 10 H8.5 M1 9 L3 2 M15 9 L17 2" stroke="#8aa0a8"/></svg>
<svg style="left:1591px;top:1026px" width="7" height="4" viewBox="0 0 7 4"><path d="M0 0 H7 L3.5 4 Z" fill="#444"/></svg>
<svg style="left:1605px;top:1020px" width="17" height="17" viewBox="0 0 17 17"><path d="M0.5 4.5 L4.5 0.5 H15.5 V12.5 L11.5 16.5 H0.5 Z" fill="#3f83d8" stroke="#1e4e90"/><path d="M0.5 4.5 H11.5 V16.5 M11.5 4.5 L15.5 0.5" stroke="#8ec0f0" fill="none"/></svg>
<svg style="left:1624px;top:1026px" width="7" height="4" viewBox="0 0 7 4"><path d="M0 0 H7 L3.5 4 Z" fill="#444"/></svg>
<svg style="left:1638px;top:1020px" width="16" height="17" viewBox="0 0 16 17"><rect x="0.5" y="8.5" width="11" height="8" fill="#6a94c8" stroke="#2a4a80"/><rect x="4.5" y="2.5" width="8" height="7" fill="#6a94c8" stroke="#2a4a80"/><path d="M11.5 8.5 L15.5 5 V13 L11.5 16.5" fill="#4a74a8" stroke="#2a4a80"/></svg>
<svg style="left:1656px;top:1026px" width="7" height="4" viewBox="0 0 7 4"><path d="M0 0 H7 L3.5 4 Z" fill="#444"/></svg>
<svg style="left:1672px;top:1020px" width="16" height="17" viewBox="0 0 16 17"><path d="M2 8 Q6 2 12 6" fill="none" stroke="#b8bcc4" stroke-width="2.5"/><path d="M8 9 L8 17 L10 15 L12 18 L13 17 L11 14 L14 14 Z" fill="#fff" stroke="#aaa"/></svg>
<div class="a" style="left:1691px;top:1019px;width:23px;height:21px;background:#cbcbcb;"></div>
<svg style="left:1696px;top:1021px" width="13" height="17" viewBox="0 0 13 17"><path d="M1 1 L1 14 L4 11 L7 16.5 L9 15.5 L6.5 10.5 L11 10.5 Z" fill="#fff" stroke="#222" stroke-width="1.1"/></svg>
<svg style="left:1725px;top:1023px" width="10" height="14" viewBox="0 0 10 14"><path d="M1 1 L1 11 L3.5 9 L6 13 L7.5 12 L5 8 L8.5 8 Z" fill="#fff" stroke="#c8c8c8"/></svg>
<div class="a" style="left:1739px;top:1019px;width:89px;height:20px;background:#fdfdfd;border:1px solid #c8c8c8"></div>
<div class="t" style="left:1741px;top:1022.84px;font-size:12px;line-height:12px;color:#111;">Drilldown: Pa</div>
<svg style="left:1818px;top:1026px" width="7" height="4" viewBox="0 0 7 4"><path d="M0 0 H7 L3.5 4 Z" fill="#444"/></svg>
<div class="a" style="left:1829px;top:1019px;width:66px;height:20px;background:#fdfdfd;border:1px solid #c8c8c8"></div>
<div class="t" style="left:1832px;top:1022.84px;font-size:12px;line-height:12px;color:#111;">Top Asse</div>
<svg style="left:1884px;top:1026px" width="7" height="4" viewBox="0 0 7 4"><path d="M0 0 H7 L3.5 4 Z" fill="#444"/></svg>
<svg style="left:1897px;top:1021px" width="17" height="16" viewBox="0 0 17 16"><rect x="6" y="0.5" width="5" height="4" fill="#e02020"/><path d="M8.5 4.5 V8 M3 8 H14 M3 8 V10 M14 8 V10" stroke="#3a70c0" fill="none"/><rect x="0.5" y="10.5" width="6" height="5" fill="#3a80d0"/><rect x="10.5" y="10.5" width="6" height="5" fill="#f0c020"/></svg>
</body></html>
